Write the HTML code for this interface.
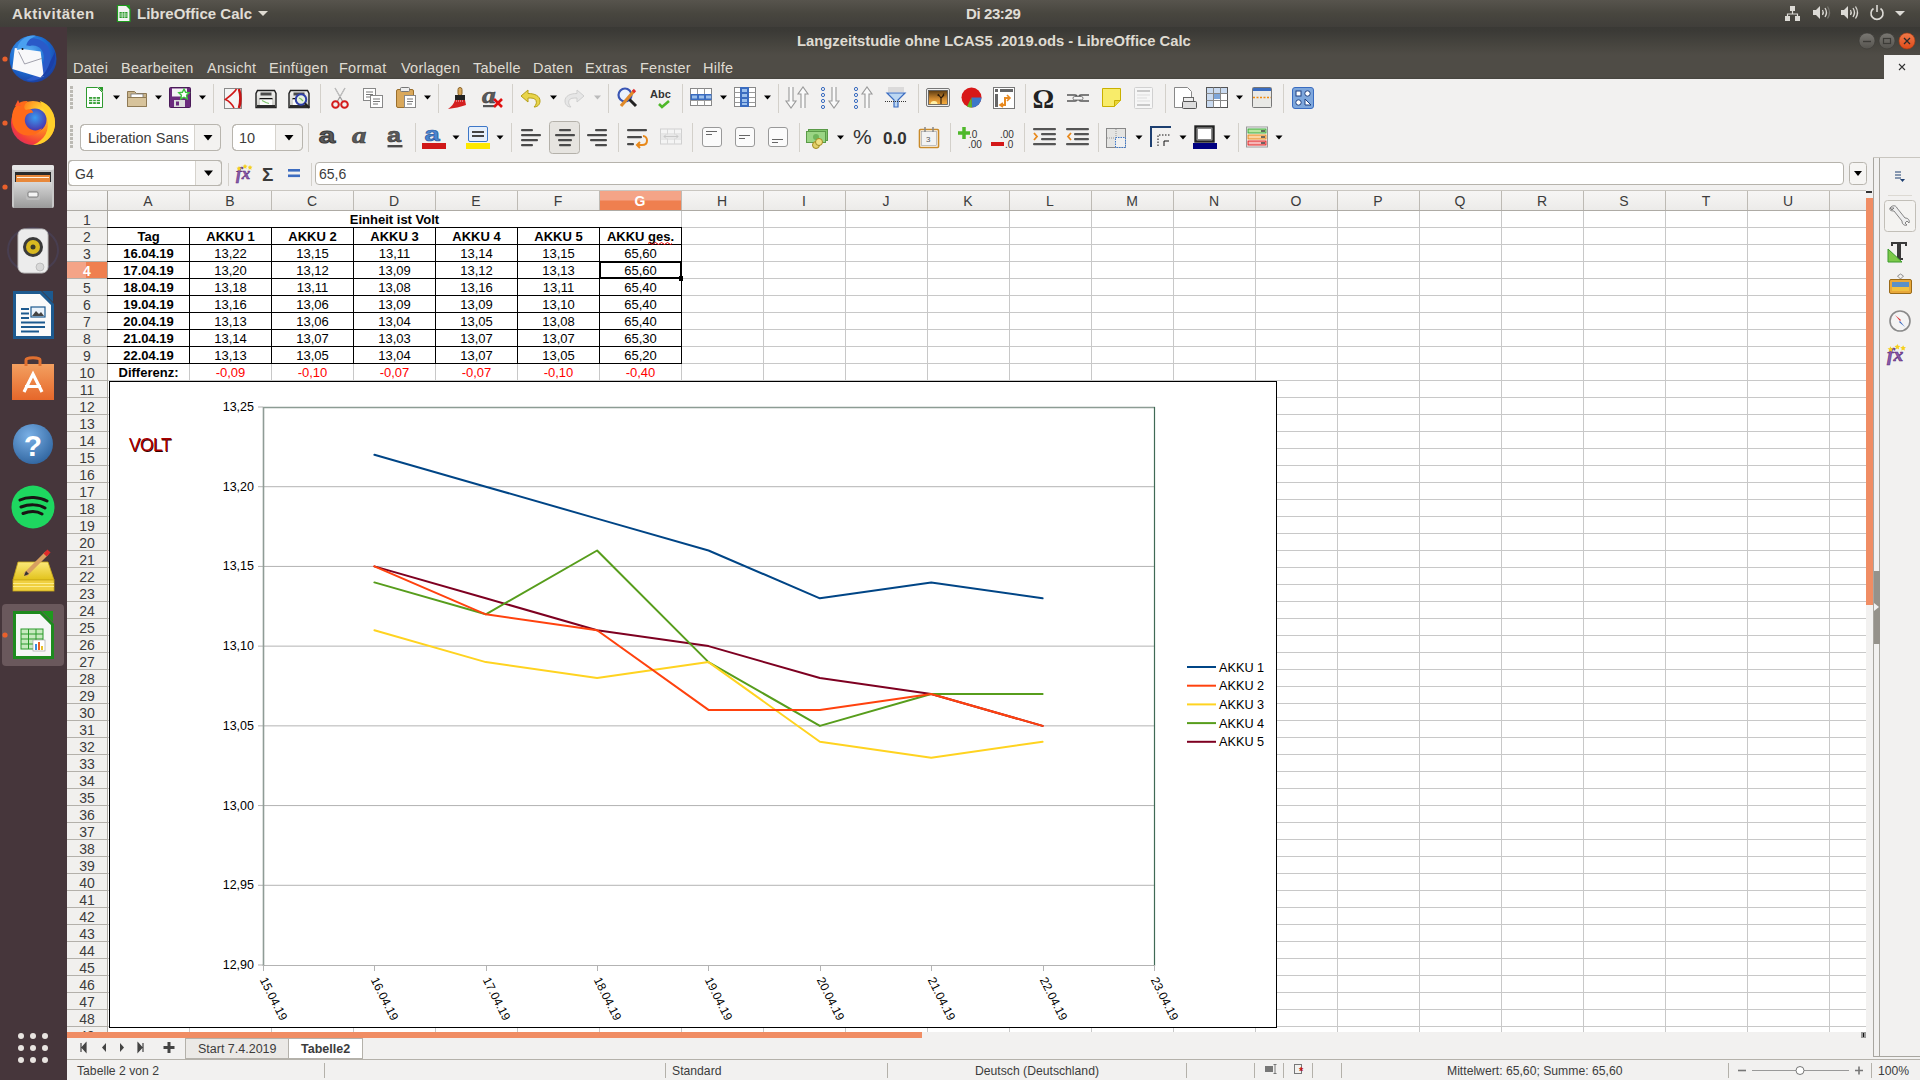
<!DOCTYPE html>
<html><head><meta charset="utf-8"><title>LibreOffice Calc</title>
<style>
html,body{margin:0;padding:0;}
body{width:1920px;height:1080px;overflow:hidden;position:relative;background:#f2f1f0;font-family:"Liberation Sans", sans-serif;}
.a{position:absolute;}
.t{position:absolute;white-space:nowrap;line-height:1;}
</style></head><body>

<div class="a" style="left:0;top:0;width:1920px;height:27px;background:linear-gradient(#57544d,#48463f 50%,#403e3a);"></div>
<div class="t" style="left:12px;top:6px;font-size:15px;font-weight:bold;color:#e0ddd6;letter-spacing:0.55px;">Aktivitäten</div>
<div class="t" style="left:137px;top:6px;font-size:15px;font-weight:bold;color:#e0ddd6;">LibreOffice Calc</div>
<div class="t" style="left:966px;top:6px;font-size:15px;font-weight:bold;color:#e0ddd6;letter-spacing:-0.4px;">Di 23:29</div>
<svg class="a" style="left:0;top:27px;" width="67" height="1053" viewBox="0 27 67 1053"><defs><radialGradient id="tbg" cx="0.4" cy="0.35" r="0.7"><stop offset="0" stop-color="#5fb3f5"/><stop offset="0.6" stop-color="#1a6ad0"/><stop offset="1" stop-color="#1b3a9a"/></radialGradient><radialGradient id="ffg" cx="0.7" cy="0.25" r="0.9"><stop offset="0" stop-color="#ffe23a"/><stop offset="0.45" stop-color="#ff8a1e"/><stop offset="0.8" stop-color="#f23c3c"/><stop offset="1" stop-color="#d62a6a"/></radialGradient><radialGradient id="ffb" cx="0.5" cy="0.4" r="0.6"><stop offset="0" stop-color="#3a9cf0"/><stop offset="1" stop-color="#4a2fa8"/></radialGradient><linearGradient id="fil" x1="0" y1="0" x2="0" y2="1"><stop offset="0" stop-color="#d8d8d8"/><stop offset="1" stop-color="#9a9a9a"/></linearGradient><linearGradient id="bag" x1="0" y1="0" x2="0" y2="1"><stop offset="0" stop-color="#f3a060"/><stop offset="1" stop-color="#e6672a"/></linearGradient><radialGradient id="hlp" cx="0.4" cy="0.3" r="0.8"><stop offset="0" stop-color="#7ab0e6"/><stop offset="1" stop-color="#2a5f9a"/></radialGradient><linearGradient id="nts" x1="0" y1="0" x2="0" y2="1"><stop offset="0" stop-color="#fbe87a"/><stop offset="1" stop-color="#e2c21a"/></linearGradient></defs><rect x="0" y="27" width="67" height="1053" fill="#46363b"/><circle cx="5" cy="59" r="2.6" fill="#e9602c"/><circle cx="5" cy="123" r="2.6" fill="#e9602c"/><circle cx="5" cy="187" r="2.6" fill="#e9602c"/><circle cx="33" cy="59" r="23.5" fill="url(#tbg)"/><path d="M20 44 C26 36 40 36 48 46 C52 54 52 66 46 74 C40 80 32 82 26 80 C36 76 44 68 44 58 C44 50 38 44 30 46 Z" fill="#2a5ac8"/><path d="M14.8 48 L40.6 51.6 L43.7 76.3 L40.6 77.5 L12.3 68.9 Z" fill="#f8f8fa"/><path d="M18.5 51.6 L24.6 64 L41.9 58.4" fill="none" stroke="#8a8a98" stroke-width="0.8"/><path d="M17 50 C18 40 28 34 36 36 C30 38 26 42 26 48 Z" fill="#4aa0f0"/><circle cx="22.5" cy="49" r="1" fill="#111"/><path d="M44 76 C52 70 56 62 55 52 L50 62 C48 68 46 72 40 78 Z" fill="#1a3fa8"/><circle cx="33" cy="123" r="22" fill="url(#ffg)"/><circle cx="35" cy="120" r="11.5" fill="url(#ffb)"/><path d="M12 118 C12 106 20 100 28 101 C24 104 23 108 26 110 C30 108 33 110 33 113 C28 112 24 116 25 122 C27 130 36 133 42 128 C38 136 26 138 18 132 C14 128 12 124 12 118 Z" fill="#ff6a1a"/><path d="M40 101 C50 104 56 114 55 126 C53 138 44 145 33 145 C45 140 50 130 47 118 C45 110 42 106 40 101 Z" fill="#ffcf2a"/><path d="M15 106 L18 100 L21 106 Z" fill="#ff5a2a"/><rect x="12" y="165" width="42" height="43" rx="2" fill="#c8c8c8"/><rect x="12" y="165" width="42" height="5" rx="2" fill="#e6e6e6"/><rect x="15" y="172" width="36" height="10" fill="#2a2a2a"/><rect x="16" y="175" width="34" height="7" fill="#e8883a"/><path d="M17 177.5 h32" stroke="#fff2e0" stroke-width="1"/><rect x="14" y="182" width="38" height="26" fill="url(#fil)"/><rect x="26" y="190" width="14" height="10" rx="2" fill="#bdbdbd"/><rect x="28" y="192" width="10" height="5" rx="1" fill="#f4f4f4" stroke="#666" stroke-width="0.8"/><ellipse cx="33" cy="250" rx="25" ry="22" fill="none" stroke="#4a4a70" stroke-width="2" opacity="0.4"/><rect x="18" y="229" width="30" height="44" rx="6" fill="#ececec" stroke="#bdbdbd"/><circle cx="33" cy="247" r="10" fill="#3a3a3a"/><circle cx="33" cy="247" r="7" fill="#d8b820"/><circle cx="33" cy="247" r="2.5" fill="#3a3a2a"/><circle cx="40" cy="267" r="4" fill="#d8d8d8" stroke="#aaa" stroke-width="0.6"/><path d="M14.5 292.5 h26 l12 12 v33 h-38 z" fill="#fafafa" stroke="#1d5a8f" stroke-width="3"/><path d="M42 291 h11 v11 z" fill="#1d5a8f"/><path d="M21 309 h8 M21 313.5 h8 M21 318 h8 M21 322.5 h24 M21 327 h24 M21 331.5 h18" stroke="#1d5a8f" stroke-width="2"/><rect x="31" y="307" width="14" height="10" fill="#eaf2fa" stroke="#1d5a8f" stroke-width="1.2"/><path d="M32 316 l4 -5 l3 3 l2 -2 l3 4 z" fill="#444"/><rect x="12" y="364" width="42" height="36" fill="url(#bag)"/><path d="M26 366 v-6 c0 -3 14 -3 14 0 v6" fill="none" stroke="#e07030" stroke-width="3"/><path d="M24 392 L33 374 L42 392" fill="none" stroke="#fff" stroke-width="3.2"/><rect x="25" y="385" width="16" height="3" fill="#fff"/><circle cx="33" cy="444" r="20" fill="url(#hlp)"/><text x="33" y="456" text-anchor="middle" font-family="Liberation Sans" font-weight="bold" font-size="30" fill="#fff">?</text><circle cx="33" cy="507" r="21.5" fill="#1ed760"/><path d="M20 500 C28 496 40 497 47 501 M21 507 C29 504 39 504 45 508 M23 513.5 C30 511 37 511 42 514" fill="none" stroke="#191414" stroke-width="3" stroke-linecap="round"/><path d="M18 562 h30 l6 18 h-41 z" fill="url(#nts)" stroke="#c8a818" stroke-width="0.8"/><rect x="13" y="580" width="41" height="11" fill="#f0d040" stroke="#c8a818" stroke-width="0.8"/><path d="M13 583.5 h41 M13 586.5 h41" stroke="#fff2a0" stroke-width="0.8"/><path d="M25 575 L47 553" stroke="#d8a060" stroke-width="4.5"/><path d="M45 555 L49 551" stroke="#e02a2a" stroke-width="4.5"/><path d="M24 576 l2 -5 l3 3 z" fill="#333"/><rect x="2" y="604" width="62" height="62" rx="4" fill="#6a585c"/><path d="M14.5 612.5 h26 l12 12 v33 h-38 z" fill="#f6f6f6" stroke="#1e8a1e" stroke-width="3"/><path d="M42 611 h11 v11 z" fill="#1e9a1e"/><rect x="21" y="629" width="22" height="20" fill="#c8eac0" stroke="#2a9a2a" stroke-width="1"/><path d="M21 634 h22 M21 639 h22 M21 644 h22 M28.5 629 v20 M36 629 v20" stroke="#2a9a2a" stroke-width="1"/><rect x="33" y="640" width="12" height="11" fill="#fff" stroke="#999" stroke-width="0.6"/><rect x="35" y="644" width="2" height="6" fill="#3a8ae0"/><rect x="38" y="642" width="2" height="8" fill="#e8602a"/><rect x="41" y="646" width="2" height="4" fill="#e8c02a"/><circle cx="5" cy="635" r="2.6" fill="#e9602c"/><circle cx="21" cy="1036" r="3" fill="#e8e4e0"/><circle cx="33" cy="1036" r="3" fill="#e8e4e0"/><circle cx="45" cy="1036" r="3" fill="#e8e4e0"/><circle cx="21" cy="1048" r="3" fill="#e8e4e0"/><circle cx="33" cy="1048" r="3" fill="#e8e4e0"/><circle cx="45" cy="1048" r="3" fill="#e8e4e0"/><circle cx="21" cy="1060" r="3" fill="#e8e4e0"/><circle cx="33" cy="1060" r="3" fill="#e8e4e0"/><circle cx="45" cy="1060" r="3" fill="#e8e4e0"/></svg>
<div class="a" style="left:67px;top:27px;width:1853px;height:52px;background:linear-gradient(#3a3935 0px,#3b3a36 4px,#47453f 18px,#4f4c46 28px,#4f4c46 50px,#45433e 52px);"></div>
<div class="t" style="left:797px;top:34px;font-size:14.8px;font-weight:bold;color:#dfdbd2;">Langzeitstudie ohne LCAS5 .2019.ods - LibreOffice Calc</div>
<div class="t" style="left:73px;top:61px;font-size:14.5px;color:#dfdbd2;letter-spacing:0.25px;">Datei</div>
<div class="t" style="left:121px;top:61px;font-size:14.5px;color:#dfdbd2;letter-spacing:0.25px;">Bearbeiten</div>
<div class="t" style="left:207px;top:61px;font-size:14.5px;color:#dfdbd2;letter-spacing:0.25px;">Ansicht</div>
<div class="t" style="left:269px;top:61px;font-size:14.5px;color:#dfdbd2;letter-spacing:0.25px;">Einfügen</div>
<div class="t" style="left:339px;top:61px;font-size:14.5px;color:#dfdbd2;letter-spacing:0.25px;">Format</div>
<div class="t" style="left:401px;top:61px;font-size:14.5px;color:#dfdbd2;letter-spacing:0.25px;">Vorlagen</div>
<div class="t" style="left:473px;top:61px;font-size:14.5px;color:#dfdbd2;letter-spacing:0.25px;">Tabelle</div>
<div class="t" style="left:533px;top:61px;font-size:14.5px;color:#dfdbd2;letter-spacing:0.25px;">Daten</div>
<div class="t" style="left:585px;top:61px;font-size:14.5px;color:#dfdbd2;letter-spacing:0.25px;">Extras</div>
<div class="t" style="left:640px;top:61px;font-size:14.5px;color:#dfdbd2;letter-spacing:0.25px;">Fenster</div>
<div class="t" style="left:703px;top:61px;font-size:14.5px;color:#dfdbd2;letter-spacing:0.25px;">Hilfe</div>
<div class="a" style="left:1884px;top:55px;width:36px;height:24px;background:#f2f1f0;"></div>
<div class="a" style="left:67px;top:79px;width:1806px;height:79px;background:#f2f1f0;"></div>
<div class="a" style="left:68px;top:160px;width:152px;height:24px;border:1px solid #b6b3ac;border-radius:3px;background:#fff;"></div>
<div class="t" style="left:75px;top:167px;font-size:14px;color:#3c3c3c;">G4</div>
<div class="a" style="left:315px;top:162px;width:1527px;height:21px;border:1px solid #b6b3ac;border-radius:4px;background:#fff;"></div>
<div class="t" style="left:319px;top:167px;font-size:14px;color:#3c3c3c;">65,6</div>
<svg class="a" style="left:0;top:0;" width="1920" height="200"><rect x="70" y="86" width="3" height="3" fill="#bcbab4"/><rect x="70" y="90" width="3" height="3" fill="#bcbab4"/><rect x="70" y="94" width="3" height="3" fill="#bcbab4"/><rect x="70" y="98" width="3" height="3" fill="#bcbab4"/><rect x="70" y="102" width="3" height="3" fill="#bcbab4"/><rect x="70" y="106" width="3" height="3" fill="#bcbab4"/><rect x="70" y="125" width="3" height="3" fill="#bcbab4"/><rect x="70" y="129" width="3" height="3" fill="#bcbab4"/><rect x="70" y="133" width="3" height="3" fill="#bcbab4"/><rect x="70" y="137" width="3" height="3" fill="#bcbab4"/><rect x="70" y="141" width="3" height="3" fill="#bcbab4"/><rect x="70" y="145" width="3" height="3" fill="#bcbab4"/><g transform="translate(85,87) scale(1.0)"><path d="M1.5 0.5 h11 l5 5 v15 h-16 z" fill="#fff" stroke="#2f9a2f"/><path d="M13 0 h5 v5 z" fill="#2a9a2a"/><rect x="4" y="10" width="11" height="7" fill="#3aa03a"/><path d="M4 12.3 h11 M4 14.6 h11 M7.7 10 v7 M11.3 10 v7" stroke="#fff" stroke-width="0.9"/></g><path d="M113.0 95.5 h7 l-3.5 4 z" fill="#000"/><g transform="translate(127,88) scale(1.0)"><path d="M0.5 3.5 h7 l2 2 h10 v13 h-19 z" fill="#c9b48c" stroke="#8f7a55"/><rect x="4" y="6" width="12" height="6" fill="#fff" stroke="#777" stroke-width="0.8"/><path d="M0.5 9.5 h19 v9 h-19 z" fill="#d7c39b" stroke="#8f7a55"/></g><path d="M155.0 95.5 h7 l-3.5 4 z" fill="#000"/><g transform="translate(169,87) scale(1.0)"><rect x="0.5" y="0.5" width="21" height="20" rx="1" fill="#6b2b7d" stroke="#4a1a58"/><rect x="3" y="1.5" width="15" height="8" fill="#f4f4f4"/><rect x="5" y="13" width="11" height="7" fill="#ddd"/><rect x="7" y="14.5" width="3" height="4" fill="#6b2b7d"/><path d="M15 2 l1.6 3.3 3.6 .5 -2.6 2.5 .6 3.6 -3.2 -1.7 -3.2 1.7 .6 -3.6 -2.6 -2.5 3.6 -.5 z" fill="#fff" stroke="#3cc23c" stroke-width="1.4"/></g><path d="M199.0 95.5 h7 l-3.5 4 z" fill="#000"/><line x1="213.5" y1="84" x2="213.5" y2="113" stroke="#d3d0ca"/><g transform="translate(224,87) scale(1.0)"><rect x="0.5" y="1.5" width="17" height="20" fill="#f4f4f4" stroke="#8a8a8a"/><path d="M12.5 2 C10 6 6 9 1.5 12.5 C5 14 8 17 10 21" fill="none" stroke="#d01818" stroke-width="1.6"/><path d="M15 2 C16.8 8 16.8 15 15 21" fill="none" stroke="#c81414" stroke-width="2.6"/></g><g transform="translate(255,87) scale(1.0)"><defs><linearGradient id="prg" x1="0" y1="0" x2="0" y2="1"><stop offset="0" stop-color="#f4f4f2"/><stop offset="1" stop-color="#c8c8c4"/></linearGradient></defs><path d="M2.5 3.5 h17 l1.5 3 v14 h-20 v-14 z" fill="url(#prg)" stroke="#1e1e1e" stroke-width="1.4"/><rect x="5.5" y="5.5" width="11" height="3" fill="#4a4a4a"/><rect x="4.5" y="11" width="13" height="1.5" fill="#111"/><rect x="5" y="12.5" width="12" height="5.5" fill="#fafafa"/><path d="M7 13.5 l4 2 l3 1" stroke="#7cc46a" stroke-width="1.1" fill="none"/><rect x="2" y="18" width="18" height="3" fill="#2a2a2a"/></g><g transform="translate(288,87) scale(1.0)"><defs><linearGradient id="prg" x1="0" y1="0" x2="0" y2="1"><stop offset="0" stop-color="#f4f4f2"/><stop offset="1" stop-color="#c8c8c4"/></linearGradient></defs><path d="M2.5 3.5 h17 l1.5 3 v14 h-20 v-14 z" fill="url(#prg)" stroke="#1e1e1e" stroke-width="1.4"/><rect x="5.5" y="5.5" width="11" height="3" fill="#4a4a4a"/><rect x="4.5" y="11" width="13" height="1.5" fill="#111"/><rect x="5" y="12.5" width="12" height="5.5" fill="#fafafa"/><path d="M7 13.5 l4 2 l3 1" stroke="#7cc46a" stroke-width="1.1" fill="none"/><rect x="2" y="18" width="18" height="3" fill="#2a2a2a"/><circle cx="13" cy="12.5" r="5.2" fill="#e6f0e0" stroke="#2f3fa8" stroke-width="2"/><path d="M11 11 l2 1 l2 2" stroke="#7cc46a" stroke-width="1.2" fill="none"/><path d="M16.8 16.3 l4.4 4.4" stroke="#222" stroke-width="2.2"/></g><line x1="320.5" y1="84" x2="320.5" y2="113" stroke="#d3d0ca"/><g transform="translate(331,87) scale(1.0)"><path d="M4 1 L12 15 M14 1 L6 15" stroke="#9a9a9a" stroke-width="1.2" fill="none"/><path d="M4 1 L9 10 M14 1 L9 10" stroke="#d8d8d8" stroke-width="0.6" fill="none"/><circle cx="4.5" cy="17.5" r="3.3" fill="none" stroke="#d31c1c" stroke-width="2"/><circle cx="13.5" cy="17.5" r="3.3" fill="none" stroke="#d31c1c" stroke-width="2"/></g><g transform="translate(363,88) scale(1.0)"><rect x="0.5" y="0.5" width="12" height="12" fill="#fff" stroke="#888"/><path d="M3 4 h7 M3 6.5 h7 M3 9 h5" stroke="#777"/><rect x="7.5" y="7.5" width="12" height="12" fill="#fff" stroke="#888"/><path d="M10 11 h7 M10 13.5 h7 M10 16 h5" stroke="#777"/></g><g transform="translate(396,87) scale(1.0)"><rect x="0.5" y="2.5" width="17" height="18" rx="1.5" fill="#d9a85b" stroke="#9a6f2c"/><rect x="4.5" y="0.5" width="9" height="4" rx="1" fill="#eee" stroke="#777"/><rect x="8.5" y="8.5" width="11" height="12" fill="#fff" stroke="#888"/><path d="M11 12 h6 M11 14.5 h6 M11 17 h5" stroke="#777"/></g><path d="M424.0 95.5 h7 l-3.5 4 z" fill="#000"/><line x1="438.5" y1="84" x2="438.5" y2="113" stroke="#d3d0ca"/><g transform="translate(447,87) scale(1.0)"><rect x="11" y="0.5" width="4" height="8" rx="2" fill="#d9a85b" stroke="#8a6428"/><rect x="8" y="8" width="10" height="5" fill="#222"/><path d="M8 13 h10 l1 5 c-5 2 -12 3 -18 4 c3 -2 6 -5 7 -9 z" fill="#d42020"/><path d="M9 14 h8" stroke="#fff" stroke-width="0.8" stroke-dasharray="1 1"/></g><g transform="translate(482,87) scale(1.0)"><text transform="scale(1.2,1)" x="0" y="16" font-family="Liberation Serif" font-style="italic" font-weight="bold" font-size="23" fill="#5a5a5a" stroke="#3a3a3a" stroke-width="0.5">a</text><rect x="1" y="18" width="11" height="2.2" fill="#555"/><path d="M12 12 l8 8 M20 12 l-8 8" stroke="#e01010" stroke-width="2.6"/></g><line x1="512.5" y1="84" x2="512.5" y2="113" stroke="#d3d0ca"/><g transform="translate(520,88) scale(1.0)"><path d="M1 8 L8 2 V5.5 C15 5.5 20 8 20 13 C20 17 17 19 14 19 C16 17 17 15 16 12.5 C15 10 12 10 8 10 V14 Z" fill="#e8d44a" stroke="#b59f18" stroke-width="1"/></g><path d="M550.0 95.5 h7 l-3.5 4 z" fill="#000"/><g transform="translate(563,88) scale(1.0)"><path d="M21 8 L14 2 V5.5 C7 5.5 2 8 2 13 C2 17 5 19 8 19 C6 17 5 15 6 12.5 C7 10 10 10 14 10 V14 Z" fill="#e6e6e6" stroke="#cfcfcf" stroke-width="1"/></g><path d="M594.0 95.5 h7 l-3.5 4 z" fill="#bbb"/><line x1="608.5" y1="84" x2="608.5" y2="113" stroke="#d3d0ca"/><g transform="translate(617,87) scale(1.0)"><circle cx="8" cy="8" r="6.5" fill="#eaf2fb" stroke="#3a56b4" stroke-width="2.2"/><path d="M12.5 12.5 L19 19" stroke="#222" stroke-width="3"/><path d="M4 19 L17 4" stroke="#e08a2a" stroke-width="3.2"/><path d="M16 5 L18 3" stroke="#e03030" stroke-width="3.2"/></g><g transform="translate(650,88) scale(1.0)"><text x="0" y="10" font-family="Liberation Sans" font-weight="bold" font-size="11" fill="#333">Abc</text><path d="M9 16 l3 3 l7 -6" fill="none" stroke="#4fb82a" stroke-width="2.6"/></g><line x1="682.5" y1="84" x2="682.5" y2="113" stroke="#d3d0ca"/><g transform="translate(690,87) scale(1.0)"><rect x="0.5" y="1.5" width="21" height="17" fill="#fff" stroke="#888"/><path d="M0.5 7.5 h21 M0.5 13.5 h21 M7.5 1.5 v17 M14.5 1.5 v17" stroke="#999"/><rect x="0.5" y="7" width="21" height="6" fill="#3a6cc0"/><rect x="2" y="8.5" width="5" height="3" fill="#9cc0ec"/><rect x="9" y="8.5" width="5" height="3" fill="#9cc0ec"/><rect x="16" y="8.5" width="5" height="3" fill="#9cc0ec"/></g><path d="M720.0 95.5 h7 l-3.5 4 z" fill="#000"/><g transform="translate(734,87) scale(1.0)"><rect x="0.5" y="0.5" width="21" height="19" fill="#fff" stroke="#888"/><path d="M0.5 5.5 h21 M0.5 10.5 h21 M0.5 15.5 h21 M7.5 0.5 v19 M14.5 0.5 v19" stroke="#999"/><rect x="6" y="0" width="9" height="20" fill="#3a6cc0"/><rect x="8" y="2" width="5" height="3" fill="#9cc0ec"/><rect x="8" y="7" width="5" height="3" fill="#9cc0ec"/><rect x="8" y="12" width="5" height="3" fill="#9cc0ec"/><rect x="8" y="16" width="5" height="2" fill="#9cc0ec"/></g><path d="M764.0 95.5 h7 l-3.5 4 z" fill="#000"/><line x1="778.5" y1="84" x2="778.5" y2="113" stroke="#d3d0ca"/><g transform="translate(786,87) scale(1.0)"><path d="M3 0 v14 h-3 l5 7 l5 -7 h-3 v-14" fill="#fafafa" stroke="#999" stroke-width="1.1"/></g><g transform="translate(798,87) scale(1.0)"><path d="M3 21 v-14 h-3 l5 -7 l5 7 h-3 v14" fill="#fafafa" stroke="#999" stroke-width="1.1"/></g><circle cx="823" cy="89" r="1.6" fill="none" stroke="#3a6cc0" stroke-width="1"/><circle cx="823" cy="95" r="1.6" fill="none" stroke="#3a6cc0" stroke-width="1"/><circle cx="823" cy="101" r="1.6" fill="none" stroke="#3a6cc0" stroke-width="1"/><circle cx="823" cy="107" r="1.6" fill="none" stroke="#3a6cc0" stroke-width="1"/><g transform="translate(829,87) scale(1.0)"><path d="M3 0 v14 h-3 l5 7 l5 -7 h-3 v-14" fill="#fafafa" stroke="#999" stroke-width="1.1"/></g><circle cx="856" cy="89" r="1.6" fill="none" stroke="#3a6cc0" stroke-width="1"/><circle cx="856" cy="95" r="1.6" fill="none" stroke="#3a6cc0" stroke-width="1"/><circle cx="856" cy="101" r="1.6" fill="none" stroke="#3a6cc0" stroke-width="1"/><circle cx="856" cy="107" r="1.6" fill="none" stroke="#3a6cc0" stroke-width="1"/><g transform="translate(862,87) scale(1.0)"><path d="M3 21 v-14 h-3 l5 -7 l5 7 h-3 v14" fill="#fafafa" stroke="#999" stroke-width="1.1"/></g><g transform="translate(885,87) scale(1.0)"><rect x="3" y="0" width="16" height="5" fill="#ccc" opacity="0.6"/><path d="M2 6 h18 l-7 7 v7 h-4 v-7 z" fill="#bcd7f2" stroke="#3a6cc0" stroke-width="1.2"/><path d="M0 14.5 h22" stroke="#333" stroke-dasharray="1 1"/></g><line x1="918.5" y1="84" x2="918.5" y2="113" stroke="#d3d0ca"/><g transform="translate(926,87) scale(1.0)"><defs><linearGradient id="skyg" x1="0" y1="0" x2="0" y2="1"><stop offset="0" stop-color="#5a3a10"/><stop offset="0.6" stop-color="#d08a30"/><stop offset="1" stop-color="#f8b040"/></linearGradient><clipPath id="imgclip"><rect x="3" y="4" width="18" height="13"/></clipPath></defs><rect x="0.5" y="1.5" width="23" height="18" rx="1.5" fill="#f0f0f0" stroke="#777"/><rect x="2.5" y="3.5" width="19" height="14" fill="url(#skyg)" stroke="#555" stroke-width="0.8"/><g clip-path="url(#imgclip)"><circle cx="8" cy="17.5" r="3.6" fill="#fff0a8"/><path d="M15 17 v-6 l-3 -4 M15 11 l3 -3 M13.5 9 l-2 -1 M16.5 9.5 l1.5 -3" stroke="#2a1a0a" stroke-width="1.1" fill="none"/></g></g><g transform="translate(961,87) scale(1.0)"><circle cx="10.5" cy="10.5" r="10" fill="#d81818"/><path d="M10.5 10.5 L20.5 10.5 A10 10 0 0 1 11 20.5 Z" fill="#3d77c8"/><path d="M10.5 10.5 L11 20.5 A10 10 0 0 1 6 19.5 Z" fill="#5cb82a"/></g><g transform="translate(993,87) scale(1.0)"><rect x="0.5" y="0.5" width="21" height="21" fill="#fff" stroke="#777"/><rect x="2" y="2" width="3" height="3" fill="#666"/><rect x="7" y="2" width="13" height="3" fill="#666"/><rect x="2" y="7" width="3" height="13" fill="#666"/><path d="M8 18 h4 v-7 h4" fill="none" stroke="#e88a20" stroke-width="2"/><path d="M14 8 l3 3 l-3 3 M10 16 l-3 2 l3 2" fill="none" stroke="#e88a20" stroke-width="1.6"/></g><line x1="1025.5" y1="84" x2="1025.5" y2="113" stroke="#d3d0ca"/><g transform="translate(1034,87) scale(1.0)"><text x="-1.5" y="20.5" font-family="Liberation Serif" font-weight="bold" font-size="27" fill="#222">Ω</text></g><g transform="translate(1067,88) scale(1.0)"><path d="M0 7 h8 c1.5 0 2 1 2 2 v2 c0 1 -0.5 2 -2 2 h-8" fill="none" stroke="#555" stroke-width="1.6"/><path d="M22 7 h-8 c-1.5 0 -2 1 -2 2 v2 c0 1 0.5 2 2 2 h8" fill="none" stroke="#555" stroke-width="1.6"/><rect x="6" y="8.5" width="10" height="3.5" rx="1.7" fill="#f4f4f4" stroke="#777" stroke-width="1"/></g><g transform="translate(1102,87) scale(1.0)"><path d="M0.5 1.5 h18 v12 l-6 6 h-12 z" fill="#f8ec6a" stroke="#c9b000"/><path d="M18.5 13.5 h-6 v6" fill="#e8d43a" stroke="#c9b000"/></g><g transform="translate(1134,87) scale(1.0)"><rect x="0.5" y="0.5" width="18" height="21" rx="1" fill="#f6f6f6" stroke="#d0d0d0"/><path d="M3 4 h13 M3 18 h13" stroke="#c8c8c8" stroke-width="2"/><path d="M3 8 h13 M3 11 h10 M3 14 h13" stroke="#ddd"/></g><line x1="1165.5" y1="84" x2="1165.5" y2="113" stroke="#d3d0ca"/><g transform="translate(1174,87) scale(1.0)"><path d="M0.5 0.5 h13 l4 4 v16 h-17 z" fill="#fff" stroke="#888"/><rect x="9.5" y="10.5" width="10" height="4" fill="#eee" stroke="#666"/><rect x="8.5" y="14.5" width="14" height="7" rx="1" fill="#ddd" stroke="#555"/></g><g transform="translate(1206,87) scale(1.0)"><rect x="0.5" y="0.5" width="21" height="20" fill="#fff" stroke="#555"/><rect x="1" y="1" width="20" height="5" fill="#c9daf0"/><rect x="1" y="1" width="6" height="19" fill="#c9daf0"/><rect x="8" y="7" width="6" height="5" fill="#7ea6da"/><path d="M0.5 6.5 h21 M0.5 13.5 h21 M7.5 0.5 v20 M14.5 0.5 v20" stroke="#888"/></g><path d="M1236.0 95.5 h7 l-3.5 4 z" fill="#000"/><g transform="translate(1252,87) scale(1.0)"><rect x="0.5" y="0.5" width="19" height="20" rx="1" fill="#e9e9e6" stroke="#777"/><rect x="1" y="1" width="18" height="3" fill="#3a6cc0"/><path d="M1 10.5 h18" stroke="#f08a10" stroke-width="1.4" stroke-dasharray="2 1.5"/></g><line x1="1283.5" y1="84" x2="1283.5" y2="113" stroke="#d3d0ca"/><g transform="translate(1292,87) scale(1.0)"><rect x="0.5" y="0.5" width="21" height="21" rx="2.5" fill="#7ea7dc" stroke="#3a6cc0"/><rect x="4" y="4" width="5" height="5" fill="#fff" stroke="#1d3f80" stroke-width="1"/><circle cx="15.5" cy="6.5" r="2.7" fill="#fff" stroke="#1d3f80" stroke-width="1"/><circle cx="6.5" cy="15.5" r="2.7" fill="#fff" stroke="#1d3f80" stroke-width="1"/><path d="M13 12 v6 h6 z" fill="#fff" stroke="#1d3f80" stroke-width="1"/></g><rect x="80.5" y="124.5" width="140" height="26" rx="4" fill="#fff" stroke="#b8b5ae"/><path d="M194.5 125 v25" stroke="#d6d3cd"/><rect x="195" y="125" width="25" height="25" fill="#f3f2f0"/><rect x="80.5" y="124.5" width="140" height="26" rx="4" fill="none" stroke="#b8b5ae"/><path d="M203.5 135 h9 l-4.5 5.5 z" fill="#000"/><text x="88" y="143" font-family="Liberation Sans" font-size="14.5" fill="#3c3c3c">Liberation Sans</text><rect x="189" y="127" width="5" height="22" fill="#fff"/><rect x="232.5" y="124.5" width="70" height="26" rx="4" fill="#fff" stroke="#b8b5ae"/><rect x="276" y="125" width="26" height="25" fill="#f3f2f0"/><path d="M275.5 125 v25" stroke="#d6d3cd"/><rect x="232.5" y="124.5" width="70" height="26" rx="4" fill="none" stroke="#b8b5ae"/><path d="M284.5 135 h9 l-4.5 5.5 z" fill="#000"/><text x="239" y="143" font-family="Liberation Sans" font-size="14.5" fill="#3c3c3c">10</text><line x1="308.5" y1="123" x2="308.5" y2="152" stroke="#d3d0ca"/><g transform="translate(318,127) scale(1.0)"><text transform="scale(1.35,1)" x="0.5" y="16" font-family="Liberation Sans" font-weight="bold" font-size="22" fill="#5a5a5a" stroke="#3a3a3a" stroke-width="1">a</text></g><g transform="translate(352,127) scale(1.0)"><text transform="scale(1.2,1)" x="0" y="16" font-family="Liberation Serif" font-style="italic" font-weight="bold" font-size="24" fill="#5a5a5a" stroke="#3a3a3a" stroke-width="0.6">a</text></g><g transform="translate(387,128) scale(1.0)"><text transform="scale(1.2,1)" x="0" y="14" font-family="Liberation Sans" font-weight="bold" font-size="21" fill="#5a5a5a" stroke="#3a3a3a" stroke-width="0.6">a</text><rect x="0.5" y="17" width="15" height="2.4" fill="#4a4a4a"/></g><line x1="415.5" y1="123" x2="415.5" y2="152" stroke="#d3d0ca"/><g transform="translate(422,126) scale(1.0)"><text transform="scale(1.3,1)" x="2" y="15" font-family="Liberation Sans" font-weight="bold" font-size="21" fill="#4a86d0" stroke="#2a5aa0" stroke-width="0.7">a</text><rect x="0" y="17" width="24" height="6" fill="#d01818"/></g><path d="M452.5 135.5 h7 l-3.5 4 z" fill="#000"/><g transform="translate(466,126) scale(1.0)"><rect x="2.5" y="0.5" width="19" height="15" rx="1.5" fill="#e6effa" stroke="#3d77c8"/><path d="M6 6 h12 M6 10 h12" stroke="#444" stroke-width="2"/><rect x="0" y="17" width="24" height="6" fill="#fde800"/></g><path d="M496.5 135.5 h7 l-3.5 4 z" fill="#000"/><line x1="511.5" y1="123" x2="511.5" y2="152" stroke="#d3d0ca"/><g transform="translate(521,129) scale(1.0)"><rect x="0" y="0" width="12" height="2.3" rx="1" fill="#4a4a4a"/><rect x="0" y="5" width="20" height="2.3" rx="1" fill="#4a4a4a"/><rect x="0" y="10" width="17" height="2.3" rx="1" fill="#4a4a4a"/><rect x="0" y="15" width="12" height="2.3" rx="1" fill="#4a4a4a"/></g><rect x="549.5" y="121.5" width="30" height="32" rx="3" fill="#e6e4e0" stroke="#b4b1aa"/><g transform="translate(555,129) scale(1.0)"><rect x="4" y="0" width="12" height="2.3" rx="1" fill="#4a4a4a"/><rect x="0" y="5" width="20" height="2.3" rx="1" fill="#4a4a4a"/><rect x="3" y="10" width="14" height="2.3" rx="1" fill="#4a4a4a"/><rect x="4" y="15" width="12" height="2.3" rx="1" fill="#4a4a4a"/></g><g transform="translate(587,129) scale(1.0)"><rect x="8" y="0" width="12" height="2.3" rx="1" fill="#4a4a4a"/><rect x="0" y="5" width="20" height="2.3" rx="1" fill="#4a4a4a"/><rect x="3" y="10" width="17" height="2.3" rx="1" fill="#4a4a4a"/><rect x="8" y="15" width="12" height="2.3" rx="1" fill="#4a4a4a"/></g><line x1="618.5" y1="123" x2="618.5" y2="152" stroke="#d3d0ca"/><g transform="translate(627,129) scale(1.0)"><rect x="0" y="0" width="20" height="2.3" rx="1" fill="#4a4a4a"/><rect x="0" y="7" width="15" height="2.3" rx="1" fill="#4a4a4a"/><rect x="0" y="14" width="7" height="2.3" rx="1" fill="#4a4a4a"/><path d="M16 7 c5 0 6 9 -1 9 h-4 M13 13 l-3 3 l3 3" fill="none" stroke="#e8891c" stroke-width="2"/></g><g transform="translate(660,128.5) scale(1.0)"><rect x="0.5" y="0.5" width="21" height="15" fill="#f4f4f4" stroke="#d0d0d0"/><path d="M0.5 5.5 h21 M0.5 10.5 h21 M7.5 0.5 v15 M14.5 0.5 v15" stroke="#d8d8d8"/><rect x="1" y="6" width="20" height="4" fill="#e8e8e8"/><path d="M4 8 h14 M6 6 l-2 2 l2 2 M16 6 l2 2 l-2 2" stroke="#c8c8c8" fill="none"/></g><line x1="692.5" y1="123" x2="692.5" y2="152" stroke="#d3d0ca"/><g transform="translate(702,127) scale(1.0)"><rect x="0.5" y="0.5" width="19" height="19" rx="2.5" fill="#fbfbfb" stroke="#999"/><path d="M4 4.5 h11 M4 7.5 h6" stroke="#666"/></g><g transform="translate(735,127) scale(1.0)"><rect x="0.5" y="0.5" width="19" height="19" rx="2.5" fill="#fbfbfb" stroke="#999"/><path d="M4 8.5 h11 M4 11.5 h6" stroke="#666"/></g><g transform="translate(768,127) scale(1.0)"><rect x="0.5" y="0.5" width="19" height="19" rx="2.5" fill="#fbfbfb" stroke="#999"/><path d="M4 12.5 h11 M4 15.5 h6" stroke="#666"/></g><line x1="799.5" y1="123" x2="799.5" y2="152" stroke="#d3d0ca"/><g transform="translate(806,128) scale(1.0)"><rect x="2.5" y="1.5" width="19" height="11" fill="#7fc46a" stroke="#5a9a48"/><rect x="0.5" y="3.5" width="19" height="11" fill="#9ad584" stroke="#5a9a48"/><circle cx="10" cy="9" r="3" fill="#6fb55a"/><circle cx="10" cy="17" r="3.5" fill="#e2d06a" stroke="#a08a20"/><circle cx="13" cy="14" r="3.5" fill="#f0df80" stroke="#a08a20"/></g><path d="M837.0 135.5 h7 l-3.5 4 z" fill="#000"/><g transform="translate(853,126) scale(1.0)"><text x="0" y="18" font-family="Liberation Sans" font-size="21" fill="#333">%</text></g><g transform="translate(883,128) scale(1.0)"><text x="0" y="16" font-family="Liberation Sans" font-weight="bold" font-size="17" fill="#333">0.0</text></g><g transform="translate(919,127) scale(1.0)"><rect x="0.5" y="2.5" width="19" height="18" rx="1" fill="#fff" stroke="#c98a2a" stroke-width="1.6"/><rect x="2.5" y="4.5" width="15" height="14" fill="#f2f2f2" stroke="#999" stroke-width="0.6"/><path d="M6 0 v5 M14 0 v5" stroke="#888" stroke-width="1.5"/><text x="7" y="15" font-family="Liberation Sans" font-size="8" fill="#555">3</text></g><line x1="950.5" y1="123" x2="950.5" y2="152" stroke="#d3d0ca"/><g transform="translate(959,127) scale(1.0)"><path d="M5 0 v12 M-1 6 h12" stroke="#4fb82a" stroke-width="3.5"/><text x="10" y="11" font-family="Liberation Sans" font-size="10" fill="#333">.0</text><text x="9" y="21" font-family="Liberation Sans" font-size="10" fill="#333">.00</text></g><g transform="translate(991,127) scale(1.0)"><rect x="0" y="15" width="13" height="4" fill="#d41818"/><text x="9" y="11" font-family="Liberation Sans" font-size="10" fill="#333">.00</text><text x="14" y="21" font-family="Liberation Sans" font-size="10" fill="#333">.0</text></g><line x1="1024.5" y1="123" x2="1024.5" y2="152" stroke="#d3d0ca"/><g transform="translate(1033,128) scale(1.0)"><rect x="0" y="0" width="23" height="2.3" rx="1" fill="#555"/><rect x="8" y="5" width="15" height="2.3" rx="1" fill="#555"/><rect x="8" y="10" width="15" height="2.3" rx="1" fill="#555"/><rect x="0" y="15" width="23" height="2.3" rx="1" fill="#555"/><path d="M1 5 l3 3.5 l-3 3.5" fill="none" stroke="#e8891c" stroke-width="1.8"/></g><g transform="translate(1066,128) scale(1.0)"><rect x="0" y="0" width="23" height="2.3" rx="1" fill="#555"/><rect x="8" y="5" width="15" height="2.3" rx="1" fill="#555"/><rect x="8" y="10" width="15" height="2.3" rx="1" fill="#555"/><rect x="0" y="15" width="23" height="2.3" rx="1" fill="#555"/><path d="M5 5 l-3 3.5 l3 3.5" fill="none" stroke="#e8891c" stroke-width="1.8"/></g><line x1="1098.5" y1="123" x2="1098.5" y2="152" stroke="#d3d0ca"/><g transform="translate(1106,128) scale(1.0)"><rect x="0.5" y="0.5" width="19" height="19" fill="#e4e4e2" stroke="#888"/><path d="M10 1 v9 M1 10 h9" stroke="#999" stroke-dasharray="1 1"/><rect x="9.5" y="9.5" width="10" height="10" fill="#f0f0f0" stroke="#3d77c8" stroke-dasharray="1.5 1"/></g><path d="M1135.5 135.5 h7 l-3.5 4 z" fill="#000"/><g transform="translate(1150,126) scale(1.0)"><path d="M1 21 V1 H21" fill="none" stroke="#1d3f70" stroke-width="2"/><path d="M8 20 V9 H21" fill="none" stroke="#111" stroke-dasharray="1.5 1.5"/><path d="M14 20 V15 H19" fill="none" stroke="#111"/></g><path d="M1179.5 135.5 h7 l-3.5 4 z" fill="#000"/><g transform="translate(1193,126) scale(1.0)"><rect x="2.5" y="0.5" width="18" height="15" fill="#fff" stroke="#222" stroke-width="2.4"/><rect x="4.5" y="2.5" width="14" height="11" fill="#fff" stroke="#888" stroke-width="1"/><rect x="0" y="17" width="24" height="6" fill="#000080"/></g><path d="M1223.5 135.5 h7 l-3.5 4 z" fill="#000"/><line x1="1238.5" y1="123" x2="1238.5" y2="152" stroke="#d3d0ca"/><g transform="translate(1246,126.5) scale(1.0)"><rect x="0.5" y="0.5" width="21" height="20" fill="#fafafa" stroke="#999"/><rect x="2" y="2.5" width="18" height="4" fill="#b9e6a0" stroke="#3ca83c"/><rect x="2" y="8.5" width="18" height="4" fill="#fcd3a0" stroke="#e8891c"/><rect x="2" y="14.5" width="18" height="4" fill="#f6b6b6" stroke="#e02020"/><path d="M15 4.5 h4 M15 10.5 h4 M15 16.5 h4" stroke="#444" stroke-width="1.3"/></g><path d="M1275.5 135.5 h7 l-3.5 4 z" fill="#000"/><line x1="228.5" y1="163" x2="228.5" y2="186" stroke="#d3d0ca"/><line x1="311.5" y1="163" x2="311.5" y2="186" stroke="#d3d0ca"/><g transform="translate(236,164) scale(1.0)"><text x="0" y="15" font-family="Liberation Serif" font-style="italic" font-weight="bold" font-size="17" fill="#8a5aaa" stroke="#5a2a7a" stroke-width="0.5">fx</text><path d="M3 2 l.8 1.6 1.7 .2 -1.3 1.2 .3 1.7 -1.5 -.8 -1.5 .8 .3 -1.7 -1.3 -1.2 1.7 -.2 z" fill="#f5d020"/><path d="M9 0 l.8 1.6 1.7 .2 -1.3 1.2 .3 1.7 -1.5 -.8 -1.5 .8 .3 -1.7 -1.3 -1.2 1.7 -.2 z" fill="#f5d020"/><path d="M14 1 l.8 1.6 1.7 .2 -1.3 1.2 .3 1.7 -1.5 -.8 -1.5 .8 .3 -1.7 -1.3 -1.2 1.7 -.2 z" fill="#f5d020"/></g><text x="262" y="181" font-family="Liberation Sans" font-weight="bold" font-size="19" fill="#3a3a3a">Σ</text><rect x="288" y="169" width="12" height="2.6" fill="#3d6cc0"/><rect x="288" y="174.5" width="12" height="2.6" fill="#3d6cc0"/></svg>
<svg class="a" style="left:67px;top:190px;" width="1799" height="842" viewBox="67 190 1799 842"><rect x="107" y="210" width="1759" height="822" fill="#fff"/><defs><linearGradient id="hdg" x1="0" y1="0" x2="0" y2="1"><stop offset="0" stop-color="#f7f6f5"/><stop offset="1" stop-color="#ecebe9"/></linearGradient></defs><rect x="67" y="190" width="1799" height="20" fill="url(#hdg)"/><rect x="67" y="210" width="40" height="822" fill="#f1f0ee"/><line x1="107" y1="210.5" x2="1866" y2="210.5" stroke="#c8c8c8" stroke-width="1"/><line x1="67" y1="210.5" x2="107" y2="210.5" stroke="#b3b0aa" stroke-width="1"/><line x1="107" y1="227.5" x2="1866" y2="227.5" stroke="#c8c8c8" stroke-width="1"/><line x1="67" y1="227.5" x2="107" y2="227.5" stroke="#b3b0aa" stroke-width="1"/><line x1="107" y1="244.5" x2="1866" y2="244.5" stroke="#c8c8c8" stroke-width="1"/><line x1="67" y1="244.5" x2="107" y2="244.5" stroke="#b3b0aa" stroke-width="1"/><line x1="107" y1="261.5" x2="1866" y2="261.5" stroke="#c8c8c8" stroke-width="1"/><line x1="67" y1="261.5" x2="107" y2="261.5" stroke="#b3b0aa" stroke-width="1"/><line x1="107" y1="278.5" x2="1866" y2="278.5" stroke="#c8c8c8" stroke-width="1"/><line x1="67" y1="278.5" x2="107" y2="278.5" stroke="#b3b0aa" stroke-width="1"/><line x1="107" y1="295.5" x2="1866" y2="295.5" stroke="#c8c8c8" stroke-width="1"/><line x1="67" y1="295.5" x2="107" y2="295.5" stroke="#b3b0aa" stroke-width="1"/><line x1="107" y1="312.5" x2="1866" y2="312.5" stroke="#c8c8c8" stroke-width="1"/><line x1="67" y1="312.5" x2="107" y2="312.5" stroke="#b3b0aa" stroke-width="1"/><line x1="107" y1="329.5" x2="1866" y2="329.5" stroke="#c8c8c8" stroke-width="1"/><line x1="67" y1="329.5" x2="107" y2="329.5" stroke="#b3b0aa" stroke-width="1"/><line x1="107" y1="346.5" x2="1866" y2="346.5" stroke="#c8c8c8" stroke-width="1"/><line x1="67" y1="346.5" x2="107" y2="346.5" stroke="#b3b0aa" stroke-width="1"/><line x1="107" y1="363.5" x2="1866" y2="363.5" stroke="#c8c8c8" stroke-width="1"/><line x1="67" y1="363.5" x2="107" y2="363.5" stroke="#b3b0aa" stroke-width="1"/><line x1="107" y1="380.5" x2="1866" y2="380.5" stroke="#c8c8c8" stroke-width="1"/><line x1="67" y1="380.5" x2="107" y2="380.5" stroke="#b3b0aa" stroke-width="1"/><line x1="107" y1="397.5" x2="1866" y2="397.5" stroke="#c8c8c8" stroke-width="1"/><line x1="67" y1="397.5" x2="107" y2="397.5" stroke="#b3b0aa" stroke-width="1"/><line x1="107" y1="414.5" x2="1866" y2="414.5" stroke="#c8c8c8" stroke-width="1"/><line x1="67" y1="414.5" x2="107" y2="414.5" stroke="#b3b0aa" stroke-width="1"/><line x1="107" y1="431.5" x2="1866" y2="431.5" stroke="#c8c8c8" stroke-width="1"/><line x1="67" y1="431.5" x2="107" y2="431.5" stroke="#b3b0aa" stroke-width="1"/><line x1="107" y1="448.5" x2="1866" y2="448.5" stroke="#c8c8c8" stroke-width="1"/><line x1="67" y1="448.5" x2="107" y2="448.5" stroke="#b3b0aa" stroke-width="1"/><line x1="107" y1="465.5" x2="1866" y2="465.5" stroke="#c8c8c8" stroke-width="1"/><line x1="67" y1="465.5" x2="107" y2="465.5" stroke="#b3b0aa" stroke-width="1"/><line x1="107" y1="482.5" x2="1866" y2="482.5" stroke="#c8c8c8" stroke-width="1"/><line x1="67" y1="482.5" x2="107" y2="482.5" stroke="#b3b0aa" stroke-width="1"/><line x1="107" y1="499.5" x2="1866" y2="499.5" stroke="#c8c8c8" stroke-width="1"/><line x1="67" y1="499.5" x2="107" y2="499.5" stroke="#b3b0aa" stroke-width="1"/><line x1="107" y1="516.5" x2="1866" y2="516.5" stroke="#c8c8c8" stroke-width="1"/><line x1="67" y1="516.5" x2="107" y2="516.5" stroke="#b3b0aa" stroke-width="1"/><line x1="107" y1="533.5" x2="1866" y2="533.5" stroke="#c8c8c8" stroke-width="1"/><line x1="67" y1="533.5" x2="107" y2="533.5" stroke="#b3b0aa" stroke-width="1"/><line x1="107" y1="550.5" x2="1866" y2="550.5" stroke="#c8c8c8" stroke-width="1"/><line x1="67" y1="550.5" x2="107" y2="550.5" stroke="#b3b0aa" stroke-width="1"/><line x1="107" y1="567.5" x2="1866" y2="567.5" stroke="#c8c8c8" stroke-width="1"/><line x1="67" y1="567.5" x2="107" y2="567.5" stroke="#b3b0aa" stroke-width="1"/><line x1="107" y1="584.5" x2="1866" y2="584.5" stroke="#c8c8c8" stroke-width="1"/><line x1="67" y1="584.5" x2="107" y2="584.5" stroke="#b3b0aa" stroke-width="1"/><line x1="107" y1="601.5" x2="1866" y2="601.5" stroke="#c8c8c8" stroke-width="1"/><line x1="67" y1="601.5" x2="107" y2="601.5" stroke="#b3b0aa" stroke-width="1"/><line x1="107" y1="618.5" x2="1866" y2="618.5" stroke="#c8c8c8" stroke-width="1"/><line x1="67" y1="618.5" x2="107" y2="618.5" stroke="#b3b0aa" stroke-width="1"/><line x1="107" y1="635.5" x2="1866" y2="635.5" stroke="#c8c8c8" stroke-width="1"/><line x1="67" y1="635.5" x2="107" y2="635.5" stroke="#b3b0aa" stroke-width="1"/><line x1="107" y1="652.5" x2="1866" y2="652.5" stroke="#c8c8c8" stroke-width="1"/><line x1="67" y1="652.5" x2="107" y2="652.5" stroke="#b3b0aa" stroke-width="1"/><line x1="107" y1="669.5" x2="1866" y2="669.5" stroke="#c8c8c8" stroke-width="1"/><line x1="67" y1="669.5" x2="107" y2="669.5" stroke="#b3b0aa" stroke-width="1"/><line x1="107" y1="686.5" x2="1866" y2="686.5" stroke="#c8c8c8" stroke-width="1"/><line x1="67" y1="686.5" x2="107" y2="686.5" stroke="#b3b0aa" stroke-width="1"/><line x1="107" y1="703.5" x2="1866" y2="703.5" stroke="#c8c8c8" stroke-width="1"/><line x1="67" y1="703.5" x2="107" y2="703.5" stroke="#b3b0aa" stroke-width="1"/><line x1="107" y1="720.5" x2="1866" y2="720.5" stroke="#c8c8c8" stroke-width="1"/><line x1="67" y1="720.5" x2="107" y2="720.5" stroke="#b3b0aa" stroke-width="1"/><line x1="107" y1="737.5" x2="1866" y2="737.5" stroke="#c8c8c8" stroke-width="1"/><line x1="67" y1="737.5" x2="107" y2="737.5" stroke="#b3b0aa" stroke-width="1"/><line x1="107" y1="754.5" x2="1866" y2="754.5" stroke="#c8c8c8" stroke-width="1"/><line x1="67" y1="754.5" x2="107" y2="754.5" stroke="#b3b0aa" stroke-width="1"/><line x1="107" y1="771.5" x2="1866" y2="771.5" stroke="#c8c8c8" stroke-width="1"/><line x1="67" y1="771.5" x2="107" y2="771.5" stroke="#b3b0aa" stroke-width="1"/><line x1="107" y1="788.5" x2="1866" y2="788.5" stroke="#c8c8c8" stroke-width="1"/><line x1="67" y1="788.5" x2="107" y2="788.5" stroke="#b3b0aa" stroke-width="1"/><line x1="107" y1="805.5" x2="1866" y2="805.5" stroke="#c8c8c8" stroke-width="1"/><line x1="67" y1="805.5" x2="107" y2="805.5" stroke="#b3b0aa" stroke-width="1"/><line x1="107" y1="822.5" x2="1866" y2="822.5" stroke="#c8c8c8" stroke-width="1"/><line x1="67" y1="822.5" x2="107" y2="822.5" stroke="#b3b0aa" stroke-width="1"/><line x1="107" y1="839.5" x2="1866" y2="839.5" stroke="#c8c8c8" stroke-width="1"/><line x1="67" y1="839.5" x2="107" y2="839.5" stroke="#b3b0aa" stroke-width="1"/><line x1="107" y1="856.5" x2="1866" y2="856.5" stroke="#c8c8c8" stroke-width="1"/><line x1="67" y1="856.5" x2="107" y2="856.5" stroke="#b3b0aa" stroke-width="1"/><line x1="107" y1="873.5" x2="1866" y2="873.5" stroke="#c8c8c8" stroke-width="1"/><line x1="67" y1="873.5" x2="107" y2="873.5" stroke="#b3b0aa" stroke-width="1"/><line x1="107" y1="890.5" x2="1866" y2="890.5" stroke="#c8c8c8" stroke-width="1"/><line x1="67" y1="890.5" x2="107" y2="890.5" stroke="#b3b0aa" stroke-width="1"/><line x1="107" y1="907.5" x2="1866" y2="907.5" stroke="#c8c8c8" stroke-width="1"/><line x1="67" y1="907.5" x2="107" y2="907.5" stroke="#b3b0aa" stroke-width="1"/><line x1="107" y1="924.5" x2="1866" y2="924.5" stroke="#c8c8c8" stroke-width="1"/><line x1="67" y1="924.5" x2="107" y2="924.5" stroke="#b3b0aa" stroke-width="1"/><line x1="107" y1="941.5" x2="1866" y2="941.5" stroke="#c8c8c8" stroke-width="1"/><line x1="67" y1="941.5" x2="107" y2="941.5" stroke="#b3b0aa" stroke-width="1"/><line x1="107" y1="958.5" x2="1866" y2="958.5" stroke="#c8c8c8" stroke-width="1"/><line x1="67" y1="958.5" x2="107" y2="958.5" stroke="#b3b0aa" stroke-width="1"/><line x1="107" y1="975.5" x2="1866" y2="975.5" stroke="#c8c8c8" stroke-width="1"/><line x1="67" y1="975.5" x2="107" y2="975.5" stroke="#b3b0aa" stroke-width="1"/><line x1="107" y1="992.5" x2="1866" y2="992.5" stroke="#c8c8c8" stroke-width="1"/><line x1="67" y1="992.5" x2="107" y2="992.5" stroke="#b3b0aa" stroke-width="1"/><line x1="107" y1="1009.5" x2="1866" y2="1009.5" stroke="#c8c8c8" stroke-width="1"/><line x1="67" y1="1009.5" x2="107" y2="1009.5" stroke="#b3b0aa" stroke-width="1"/><line x1="107" y1="1026.5" x2="1866" y2="1026.5" stroke="#c8c8c8" stroke-width="1"/><line x1="67" y1="1026.5" x2="107" y2="1026.5" stroke="#b3b0aa" stroke-width="1"/><line x1="107" y1="1043.5" x2="1866" y2="1043.5" stroke="#c8c8c8" stroke-width="1"/><line x1="67" y1="1043.5" x2="107" y2="1043.5" stroke="#b3b0aa" stroke-width="1"/><line x1="107.5" y1="210" x2="107.5" y2="1032" stroke="#c8c8c8" stroke-width="1"/><line x1="107.5" y1="190" x2="107.5" y2="210" stroke="#bdbab4" stroke-width="1"/><line x1="189.5" y1="210" x2="189.5" y2="1032" stroke="#c8c8c8" stroke-width="1"/><line x1="189.5" y1="190" x2="189.5" y2="210" stroke="#bdbab4" stroke-width="1"/><line x1="271.5" y1="210" x2="271.5" y2="1032" stroke="#c8c8c8" stroke-width="1"/><line x1="271.5" y1="190" x2="271.5" y2="210" stroke="#bdbab4" stroke-width="1"/><line x1="353.5" y1="210" x2="353.5" y2="1032" stroke="#c8c8c8" stroke-width="1"/><line x1="353.5" y1="190" x2="353.5" y2="210" stroke="#bdbab4" stroke-width="1"/><line x1="435.5" y1="210" x2="435.5" y2="1032" stroke="#c8c8c8" stroke-width="1"/><line x1="435.5" y1="190" x2="435.5" y2="210" stroke="#bdbab4" stroke-width="1"/><line x1="517.5" y1="210" x2="517.5" y2="1032" stroke="#c8c8c8" stroke-width="1"/><line x1="517.5" y1="190" x2="517.5" y2="210" stroke="#bdbab4" stroke-width="1"/><line x1="599.5" y1="210" x2="599.5" y2="1032" stroke="#c8c8c8" stroke-width="1"/><line x1="599.5" y1="190" x2="599.5" y2="210" stroke="#bdbab4" stroke-width="1"/><line x1="681.5" y1="210" x2="681.5" y2="1032" stroke="#c8c8c8" stroke-width="1"/><line x1="681.5" y1="190" x2="681.5" y2="210" stroke="#bdbab4" stroke-width="1"/><line x1="763.5" y1="210" x2="763.5" y2="1032" stroke="#c8c8c8" stroke-width="1"/><line x1="763.5" y1="190" x2="763.5" y2="210" stroke="#bdbab4" stroke-width="1"/><line x1="845.5" y1="210" x2="845.5" y2="1032" stroke="#c8c8c8" stroke-width="1"/><line x1="845.5" y1="190" x2="845.5" y2="210" stroke="#bdbab4" stroke-width="1"/><line x1="927.5" y1="210" x2="927.5" y2="1032" stroke="#c8c8c8" stroke-width="1"/><line x1="927.5" y1="190" x2="927.5" y2="210" stroke="#bdbab4" stroke-width="1"/><line x1="1009.5" y1="210" x2="1009.5" y2="1032" stroke="#c8c8c8" stroke-width="1"/><line x1="1009.5" y1="190" x2="1009.5" y2="210" stroke="#bdbab4" stroke-width="1"/><line x1="1091.5" y1="210" x2="1091.5" y2="1032" stroke="#c8c8c8" stroke-width="1"/><line x1="1091.5" y1="190" x2="1091.5" y2="210" stroke="#bdbab4" stroke-width="1"/><line x1="1173.5" y1="210" x2="1173.5" y2="1032" stroke="#c8c8c8" stroke-width="1"/><line x1="1173.5" y1="190" x2="1173.5" y2="210" stroke="#bdbab4" stroke-width="1"/><line x1="1255.5" y1="210" x2="1255.5" y2="1032" stroke="#c8c8c8" stroke-width="1"/><line x1="1255.5" y1="190" x2="1255.5" y2="210" stroke="#bdbab4" stroke-width="1"/><line x1="1337.5" y1="210" x2="1337.5" y2="1032" stroke="#c8c8c8" stroke-width="1"/><line x1="1337.5" y1="190" x2="1337.5" y2="210" stroke="#bdbab4" stroke-width="1"/><line x1="1419.5" y1="210" x2="1419.5" y2="1032" stroke="#c8c8c8" stroke-width="1"/><line x1="1419.5" y1="190" x2="1419.5" y2="210" stroke="#bdbab4" stroke-width="1"/><line x1="1501.5" y1="210" x2="1501.5" y2="1032" stroke="#c8c8c8" stroke-width="1"/><line x1="1501.5" y1="190" x2="1501.5" y2="210" stroke="#bdbab4" stroke-width="1"/><line x1="1583.5" y1="210" x2="1583.5" y2="1032" stroke="#c8c8c8" stroke-width="1"/><line x1="1583.5" y1="190" x2="1583.5" y2="210" stroke="#bdbab4" stroke-width="1"/><line x1="1665.5" y1="210" x2="1665.5" y2="1032" stroke="#c8c8c8" stroke-width="1"/><line x1="1665.5" y1="190" x2="1665.5" y2="210" stroke="#bdbab4" stroke-width="1"/><line x1="1747.5" y1="210" x2="1747.5" y2="1032" stroke="#c8c8c8" stroke-width="1"/><line x1="1747.5" y1="190" x2="1747.5" y2="210" stroke="#bdbab4" stroke-width="1"/><line x1="1829.5" y1="210" x2="1829.5" y2="1032" stroke="#c8c8c8" stroke-width="1"/><line x1="1829.5" y1="190" x2="1829.5" y2="210" stroke="#bdbab4" stroke-width="1"/><line x1="1911.5" y1="210" x2="1911.5" y2="1032" stroke="#c8c8c8" stroke-width="1"/><line x1="1911.5" y1="190" x2="1911.5" y2="210" stroke="#bdbab4" stroke-width="1"/><line x1="67" y1="210.5" x2="1866" y2="210.5" stroke="#aeaba5"/><line x1="107.5" y1="190" x2="107.5" y2="1032" stroke="#a9a6a0"/><line x1="67" y1="190.5" x2="1866" y2="190.5" stroke="#c9c6c0"/><rect x="600" y="191" width="81" height="19" fill="#ef7f4f"/><rect x="600" y="191" width="81" height="9.5" fill="#f4a487"/><rect x="67" y="262" width="40" height="16" fill="#ef7f4f"/><rect x="67" y="262" width="19" height="16" fill="#f4a487"/><text x="148.0" y="206" text-anchor="middle" font-family="Liberation Sans" font-size="14" fill="#3c3c3c">A</text><text x="230.0" y="206" text-anchor="middle" font-family="Liberation Sans" font-size="14" fill="#3c3c3c">B</text><text x="312.0" y="206" text-anchor="middle" font-family="Liberation Sans" font-size="14" fill="#3c3c3c">C</text><text x="394.0" y="206" text-anchor="middle" font-family="Liberation Sans" font-size="14" fill="#3c3c3c">D</text><text x="476.0" y="206" text-anchor="middle" font-family="Liberation Sans" font-size="14" fill="#3c3c3c">E</text><text x="558.0" y="206" text-anchor="middle" font-family="Liberation Sans" font-size="14" fill="#3c3c3c">F</text><text x="640.0" y="206" text-anchor="middle" font-family="Liberation Sans" font-size="14" font-weight="bold" fill="#fff">G</text><text x="722.0" y="206" text-anchor="middle" font-family="Liberation Sans" font-size="14" fill="#3c3c3c">H</text><text x="804.0" y="206" text-anchor="middle" font-family="Liberation Sans" font-size="14" fill="#3c3c3c">I</text><text x="886.0" y="206" text-anchor="middle" font-family="Liberation Sans" font-size="14" fill="#3c3c3c">J</text><text x="968.0" y="206" text-anchor="middle" font-family="Liberation Sans" font-size="14" fill="#3c3c3c">K</text><text x="1050.0" y="206" text-anchor="middle" font-family="Liberation Sans" font-size="14" fill="#3c3c3c">L</text><text x="1132.0" y="206" text-anchor="middle" font-family="Liberation Sans" font-size="14" fill="#3c3c3c">M</text><text x="1214.0" y="206" text-anchor="middle" font-family="Liberation Sans" font-size="14" fill="#3c3c3c">N</text><text x="1296.0" y="206" text-anchor="middle" font-family="Liberation Sans" font-size="14" fill="#3c3c3c">O</text><text x="1378.0" y="206" text-anchor="middle" font-family="Liberation Sans" font-size="14" fill="#3c3c3c">P</text><text x="1460.0" y="206" text-anchor="middle" font-family="Liberation Sans" font-size="14" fill="#3c3c3c">Q</text><text x="1542.0" y="206" text-anchor="middle" font-family="Liberation Sans" font-size="14" fill="#3c3c3c">R</text><text x="1624.0" y="206" text-anchor="middle" font-family="Liberation Sans" font-size="14" fill="#3c3c3c">S</text><text x="1706.0" y="206" text-anchor="middle" font-family="Liberation Sans" font-size="14" fill="#3c3c3c">T</text><text x="1788.0" y="206" text-anchor="middle" font-family="Liberation Sans" font-size="14" fill="#3c3c3c">U</text><text x="87" y="225" text-anchor="middle" font-family="Liberation Sans" font-size="14" fill="#3c3c3c">1</text><text x="87" y="242" text-anchor="middle" font-family="Liberation Sans" font-size="14" fill="#3c3c3c">2</text><text x="87" y="259" text-anchor="middle" font-family="Liberation Sans" font-size="14" fill="#3c3c3c">3</text><text x="87" y="276" text-anchor="middle" font-family="Liberation Sans" font-size="14" font-weight="bold" fill="#fff">4</text><text x="87" y="293" text-anchor="middle" font-family="Liberation Sans" font-size="14" fill="#3c3c3c">5</text><text x="87" y="310" text-anchor="middle" font-family="Liberation Sans" font-size="14" fill="#3c3c3c">6</text><text x="87" y="327" text-anchor="middle" font-family="Liberation Sans" font-size="14" fill="#3c3c3c">7</text><text x="87" y="344" text-anchor="middle" font-family="Liberation Sans" font-size="14" fill="#3c3c3c">8</text><text x="87" y="361" text-anchor="middle" font-family="Liberation Sans" font-size="14" fill="#3c3c3c">9</text><text x="87" y="378" text-anchor="middle" font-family="Liberation Sans" font-size="14" fill="#3c3c3c">10</text><text x="87" y="395" text-anchor="middle" font-family="Liberation Sans" font-size="14" fill="#3c3c3c">11</text><text x="87" y="412" text-anchor="middle" font-family="Liberation Sans" font-size="14" fill="#3c3c3c">12</text><text x="87" y="429" text-anchor="middle" font-family="Liberation Sans" font-size="14" fill="#3c3c3c">13</text><text x="87" y="446" text-anchor="middle" font-family="Liberation Sans" font-size="14" fill="#3c3c3c">14</text><text x="87" y="463" text-anchor="middle" font-family="Liberation Sans" font-size="14" fill="#3c3c3c">15</text><text x="87" y="480" text-anchor="middle" font-family="Liberation Sans" font-size="14" fill="#3c3c3c">16</text><text x="87" y="497" text-anchor="middle" font-family="Liberation Sans" font-size="14" fill="#3c3c3c">17</text><text x="87" y="514" text-anchor="middle" font-family="Liberation Sans" font-size="14" fill="#3c3c3c">18</text><text x="87" y="531" text-anchor="middle" font-family="Liberation Sans" font-size="14" fill="#3c3c3c">19</text><text x="87" y="548" text-anchor="middle" font-family="Liberation Sans" font-size="14" fill="#3c3c3c">20</text><text x="87" y="565" text-anchor="middle" font-family="Liberation Sans" font-size="14" fill="#3c3c3c">21</text><text x="87" y="582" text-anchor="middle" font-family="Liberation Sans" font-size="14" fill="#3c3c3c">22</text><text x="87" y="599" text-anchor="middle" font-family="Liberation Sans" font-size="14" fill="#3c3c3c">23</text><text x="87" y="616" text-anchor="middle" font-family="Liberation Sans" font-size="14" fill="#3c3c3c">24</text><text x="87" y="633" text-anchor="middle" font-family="Liberation Sans" font-size="14" fill="#3c3c3c">25</text><text x="87" y="650" text-anchor="middle" font-family="Liberation Sans" font-size="14" fill="#3c3c3c">26</text><text x="87" y="667" text-anchor="middle" font-family="Liberation Sans" font-size="14" fill="#3c3c3c">27</text><text x="87" y="684" text-anchor="middle" font-family="Liberation Sans" font-size="14" fill="#3c3c3c">28</text><text x="87" y="701" text-anchor="middle" font-family="Liberation Sans" font-size="14" fill="#3c3c3c">29</text><text x="87" y="718" text-anchor="middle" font-family="Liberation Sans" font-size="14" fill="#3c3c3c">30</text><text x="87" y="735" text-anchor="middle" font-family="Liberation Sans" font-size="14" fill="#3c3c3c">31</text><text x="87" y="752" text-anchor="middle" font-family="Liberation Sans" font-size="14" fill="#3c3c3c">32</text><text x="87" y="769" text-anchor="middle" font-family="Liberation Sans" font-size="14" fill="#3c3c3c">33</text><text x="87" y="786" text-anchor="middle" font-family="Liberation Sans" font-size="14" fill="#3c3c3c">34</text><text x="87" y="803" text-anchor="middle" font-family="Liberation Sans" font-size="14" fill="#3c3c3c">35</text><text x="87" y="820" text-anchor="middle" font-family="Liberation Sans" font-size="14" fill="#3c3c3c">36</text><text x="87" y="837" text-anchor="middle" font-family="Liberation Sans" font-size="14" fill="#3c3c3c">37</text><text x="87" y="854" text-anchor="middle" font-family="Liberation Sans" font-size="14" fill="#3c3c3c">38</text><text x="87" y="871" text-anchor="middle" font-family="Liberation Sans" font-size="14" fill="#3c3c3c">39</text><text x="87" y="888" text-anchor="middle" font-family="Liberation Sans" font-size="14" fill="#3c3c3c">40</text><text x="87" y="905" text-anchor="middle" font-family="Liberation Sans" font-size="14" fill="#3c3c3c">41</text><text x="87" y="922" text-anchor="middle" font-family="Liberation Sans" font-size="14" fill="#3c3c3c">42</text><text x="87" y="939" text-anchor="middle" font-family="Liberation Sans" font-size="14" fill="#3c3c3c">43</text><text x="87" y="956" text-anchor="middle" font-family="Liberation Sans" font-size="14" fill="#3c3c3c">44</text><text x="87" y="973" text-anchor="middle" font-family="Liberation Sans" font-size="14" fill="#3c3c3c">45</text><text x="87" y="990" text-anchor="middle" font-family="Liberation Sans" font-size="14" fill="#3c3c3c">46</text><text x="87" y="1007" text-anchor="middle" font-family="Liberation Sans" font-size="14" fill="#3c3c3c">47</text><text x="87" y="1024" text-anchor="middle" font-family="Liberation Sans" font-size="14" fill="#3c3c3c">48</text><text x="87" y="1041" text-anchor="middle" font-family="Liberation Sans" font-size="14" fill="#3c3c3c">49</text></svg>
<svg class="a" style="left:107px;top:210px;" width="576" height="172"><rect x="1" y="1" width="573" height="16" fill="#fff"/><line x1="0" y1="17.5" x2="575" y2="17.5" stroke="#000"/><line x1="0" y1="34.5" x2="575" y2="34.5" stroke="#000"/><line x1="0" y1="51.5" x2="575" y2="51.5" stroke="#000"/><line x1="0" y1="68.5" x2="575" y2="68.5" stroke="#000"/><line x1="0" y1="85.5" x2="575" y2="85.5" stroke="#000"/><line x1="0" y1="102.5" x2="575" y2="102.5" stroke="#000"/><line x1="0" y1="119.5" x2="575" y2="119.5" stroke="#000"/><line x1="0" y1="136.5" x2="575" y2="136.5" stroke="#000"/><line x1="0" y1="153.5" x2="575" y2="153.5" stroke="#000"/><line x1="82.5" y1="17" x2="82.5" y2="154" stroke="#000"/><line x1="164.5" y1="17" x2="164.5" y2="154" stroke="#000"/><line x1="246.5" y1="17" x2="246.5" y2="154" stroke="#000"/><line x1="328.5" y1="17" x2="328.5" y2="154" stroke="#000"/><line x1="410.5" y1="17" x2="410.5" y2="154" stroke="#000"/><line x1="492.5" y1="17" x2="492.5" y2="154" stroke="#000"/><line x1="574.5" y1="17" x2="574.5" y2="154" stroke="#000"/><rect x="493" y="52" width="81" height="16" fill="none" stroke="#000" stroke-width="2"/><rect x="572" y="66" width="5" height="5" fill="#000"/><text x="287.5" y="14" text-anchor="middle" font-family="Liberation Sans" font-size="13" font-weight="bold" fill="#000">Einheit ist Volt</text><text x="41.5" y="31" text-anchor="middle" font-family="Liberation Sans" font-size="13" font-weight="bold" fill="#000">Tag</text><text x="123.5" y="31" text-anchor="middle" font-family="Liberation Sans" font-size="13" font-weight="bold" fill="#000">AKKU 1</text><text x="205.5" y="31" text-anchor="middle" font-family="Liberation Sans" font-size="13" font-weight="bold" fill="#000">AKKU 2</text><text x="287.5" y="31" text-anchor="middle" font-family="Liberation Sans" font-size="13" font-weight="bold" fill="#000">AKKU 3</text><text x="369.5" y="31" text-anchor="middle" font-family="Liberation Sans" font-size="13" font-weight="bold" fill="#000">AKKU 4</text><text x="451.5" y="31" text-anchor="middle" font-family="Liberation Sans" font-size="13" font-weight="bold" fill="#000">AKKU 5</text><text x="533.5" y="31" text-anchor="middle" font-family="Liberation Sans" font-size="13" font-weight="bold" fill="#000">AKKU ges.</text><text x="41.5" y="48" text-anchor="middle" font-family="Liberation Sans" font-size="13" font-weight="bold" fill="#000">16.04.19</text><text x="123.5" y="48" text-anchor="middle" font-family="Liberation Sans" font-size="13" fill="#000">13,22</text><text x="205.5" y="48" text-anchor="middle" font-family="Liberation Sans" font-size="13" fill="#000">13,15</text><text x="287.5" y="48" text-anchor="middle" font-family="Liberation Sans" font-size="13" fill="#000">13,11</text><text x="369.5" y="48" text-anchor="middle" font-family="Liberation Sans" font-size="13" fill="#000">13,14</text><text x="451.5" y="48" text-anchor="middle" font-family="Liberation Sans" font-size="13" fill="#000">13,15</text><text x="533.5" y="48" text-anchor="middle" font-family="Liberation Sans" font-size="13" fill="#000">65,60</text><text x="41.5" y="65" text-anchor="middle" font-family="Liberation Sans" font-size="13" font-weight="bold" fill="#000">17.04.19</text><text x="123.5" y="65" text-anchor="middle" font-family="Liberation Sans" font-size="13" fill="#000">13,20</text><text x="205.5" y="65" text-anchor="middle" font-family="Liberation Sans" font-size="13" fill="#000">13,12</text><text x="287.5" y="65" text-anchor="middle" font-family="Liberation Sans" font-size="13" fill="#000">13,09</text><text x="369.5" y="65" text-anchor="middle" font-family="Liberation Sans" font-size="13" fill="#000">13,12</text><text x="451.5" y="65" text-anchor="middle" font-family="Liberation Sans" font-size="13" fill="#000">13,13</text><text x="533.5" y="65" text-anchor="middle" font-family="Liberation Sans" font-size="13" fill="#000">65,60</text><text x="41.5" y="82" text-anchor="middle" font-family="Liberation Sans" font-size="13" font-weight="bold" fill="#000">18.04.19</text><text x="123.5" y="82" text-anchor="middle" font-family="Liberation Sans" font-size="13" fill="#000">13,18</text><text x="205.5" y="82" text-anchor="middle" font-family="Liberation Sans" font-size="13" fill="#000">13,11</text><text x="287.5" y="82" text-anchor="middle" font-family="Liberation Sans" font-size="13" fill="#000">13,08</text><text x="369.5" y="82" text-anchor="middle" font-family="Liberation Sans" font-size="13" fill="#000">13,16</text><text x="451.5" y="82" text-anchor="middle" font-family="Liberation Sans" font-size="13" fill="#000">13,11</text><text x="533.5" y="82" text-anchor="middle" font-family="Liberation Sans" font-size="13" fill="#000">65,40</text><text x="41.5" y="99" text-anchor="middle" font-family="Liberation Sans" font-size="13" font-weight="bold" fill="#000">19.04.19</text><text x="123.5" y="99" text-anchor="middle" font-family="Liberation Sans" font-size="13" fill="#000">13,16</text><text x="205.5" y="99" text-anchor="middle" font-family="Liberation Sans" font-size="13" fill="#000">13,06</text><text x="287.5" y="99" text-anchor="middle" font-family="Liberation Sans" font-size="13" fill="#000">13,09</text><text x="369.5" y="99" text-anchor="middle" font-family="Liberation Sans" font-size="13" fill="#000">13,09</text><text x="451.5" y="99" text-anchor="middle" font-family="Liberation Sans" font-size="13" fill="#000">13,10</text><text x="533.5" y="99" text-anchor="middle" font-family="Liberation Sans" font-size="13" fill="#000">65,40</text><text x="41.5" y="116" text-anchor="middle" font-family="Liberation Sans" font-size="13" font-weight="bold" fill="#000">20.04.19</text><text x="123.5" y="116" text-anchor="middle" font-family="Liberation Sans" font-size="13" fill="#000">13,13</text><text x="205.5" y="116" text-anchor="middle" font-family="Liberation Sans" font-size="13" fill="#000">13,06</text><text x="287.5" y="116" text-anchor="middle" font-family="Liberation Sans" font-size="13" fill="#000">13,04</text><text x="369.5" y="116" text-anchor="middle" font-family="Liberation Sans" font-size="13" fill="#000">13,05</text><text x="451.5" y="116" text-anchor="middle" font-family="Liberation Sans" font-size="13" fill="#000">13,08</text><text x="533.5" y="116" text-anchor="middle" font-family="Liberation Sans" font-size="13" fill="#000">65,40</text><text x="41.5" y="133" text-anchor="middle" font-family="Liberation Sans" font-size="13" font-weight="bold" fill="#000">21.04.19</text><text x="123.5" y="133" text-anchor="middle" font-family="Liberation Sans" font-size="13" fill="#000">13,14</text><text x="205.5" y="133" text-anchor="middle" font-family="Liberation Sans" font-size="13" fill="#000">13,07</text><text x="287.5" y="133" text-anchor="middle" font-family="Liberation Sans" font-size="13" fill="#000">13,03</text><text x="369.5" y="133" text-anchor="middle" font-family="Liberation Sans" font-size="13" fill="#000">13,07</text><text x="451.5" y="133" text-anchor="middle" font-family="Liberation Sans" font-size="13" fill="#000">13,07</text><text x="533.5" y="133" text-anchor="middle" font-family="Liberation Sans" font-size="13" fill="#000">65,30</text><text x="41.5" y="150" text-anchor="middle" font-family="Liberation Sans" font-size="13" font-weight="bold" fill="#000">22.04.19</text><text x="123.5" y="150" text-anchor="middle" font-family="Liberation Sans" font-size="13" fill="#000">13,13</text><text x="205.5" y="150" text-anchor="middle" font-family="Liberation Sans" font-size="13" fill="#000">13,05</text><text x="287.5" y="150" text-anchor="middle" font-family="Liberation Sans" font-size="13" fill="#000">13,04</text><text x="369.5" y="150" text-anchor="middle" font-family="Liberation Sans" font-size="13" fill="#000">13,07</text><text x="451.5" y="150" text-anchor="middle" font-family="Liberation Sans" font-size="13" fill="#000">13,05</text><text x="533.5" y="150" text-anchor="middle" font-family="Liberation Sans" font-size="13" fill="#000">65,20</text><text x="41.5" y="167" text-anchor="middle" font-family="Liberation Sans" font-size="13" font-weight="bold" fill="#000">Differenz:</text><text x="123.5" y="167" text-anchor="middle" font-family="Liberation Sans" font-size="13" fill="#ff0000">-0,09</text><text x="205.5" y="167" text-anchor="middle" font-family="Liberation Sans" font-size="13" fill="#ff0000">-0,10</text><text x="287.5" y="167" text-anchor="middle" font-family="Liberation Sans" font-size="13" fill="#ff0000">-0,07</text><text x="369.5" y="167" text-anchor="middle" font-family="Liberation Sans" font-size="13" fill="#ff0000">-0,07</text><text x="451.5" y="167" text-anchor="middle" font-family="Liberation Sans" font-size="13" fill="#ff0000">-0,10</text><text x="533.5" y="167" text-anchor="middle" font-family="Liberation Sans" font-size="13" fill="#ff0000">-0,40</text><path d="M541 33.5 q1.5 -2 3 0 t3 0 t3 0 t3 0 t3 0 t3 0 t3 0 t3 0" fill="none" stroke="#e00" stroke-width="1"/></svg>
<svg class="a" style="left:109px;top:381px;" width="1168" height="647" viewBox="109 381 1168 647"><rect x="109.5" y="381.5" width="1167" height="646" fill="#fff" stroke="#000" stroke-width="1"/><line x1="258" y1="407.00" x2="263" y2="407.00" stroke="#b3b3b3"/><text x="254" y="410.5" text-anchor="end" font-family="Liberation Sans" font-size="12.5" fill="#000">13,25</text><line x1="263" y1="486.71" x2="1154" y2="486.71" stroke="#b3b3b3"/><line x1="258" y1="486.71" x2="263" y2="486.71" stroke="#b3b3b3"/><text x="254" y="490.5" text-anchor="end" font-family="Liberation Sans" font-size="12.5" fill="#000">13,20</text><line x1="263" y1="566.43" x2="1154" y2="566.43" stroke="#b3b3b3"/><line x1="258" y1="566.43" x2="263" y2="566.43" stroke="#b3b3b3"/><text x="254" y="569.5" text-anchor="end" font-family="Liberation Sans" font-size="12.5" fill="#000">13,15</text><line x1="263" y1="646.14" x2="1154" y2="646.14" stroke="#b3b3b3"/><line x1="258" y1="646.14" x2="263" y2="646.14" stroke="#b3b3b3"/><text x="254" y="649.5" text-anchor="end" font-family="Liberation Sans" font-size="12.5" fill="#000">13,10</text><line x1="263" y1="725.86" x2="1154" y2="725.86" stroke="#b3b3b3"/><line x1="258" y1="725.86" x2="263" y2="725.86" stroke="#b3b3b3"/><text x="254" y="729.5" text-anchor="end" font-family="Liberation Sans" font-size="12.5" fill="#000">13,05</text><line x1="263" y1="805.57" x2="1154" y2="805.57" stroke="#b3b3b3"/><line x1="258" y1="805.57" x2="263" y2="805.57" stroke="#b3b3b3"/><text x="254" y="809.5" text-anchor="end" font-family="Liberation Sans" font-size="12.5" fill="#000">13,00</text><line x1="263" y1="885.29" x2="1154" y2="885.29" stroke="#b3b3b3"/><line x1="258" y1="885.29" x2="263" y2="885.29" stroke="#b3b3b3"/><text x="254" y="888.5" text-anchor="end" font-family="Liberation Sans" font-size="12.5" fill="#000">12,95</text><line x1="258" y1="965.00" x2="263" y2="965.00" stroke="#b3b3b3"/><text x="254" y="968.5" text-anchor="end" font-family="Liberation Sans" font-size="12.5" fill="#000">12,90</text><line x1="263" y1="407.5" x2="1155" y2="407.5" stroke="#8c9c94" stroke-width="1.4"/><line x1="263" y1="965.5" x2="1155" y2="965.5" stroke="#b3b3b3"/><line x1="263.5" y1="407" x2="263.5" y2="966" stroke="#8f9c96" stroke-width="1.6"/><line x1="1154.5" y1="407" x2="1154.5" y2="966" stroke="#3f6a55" stroke-width="1.2"/><line x1="263.5" y1="965" x2="263.5" y2="971" stroke="#b3b3b3"/><text transform="translate(263,978) rotate(63)" x="0" y="4" font-family="Liberation Sans" font-size="12" fill="#000">15.04.19</text><line x1="374.5" y1="965" x2="374.5" y2="971" stroke="#b3b3b3"/><text transform="translate(374,978) rotate(63)" x="0" y="4" font-family="Liberation Sans" font-size="12" fill="#000">16.04.19</text><line x1="486.5" y1="965" x2="486.5" y2="971" stroke="#b3b3b3"/><text transform="translate(486,978) rotate(63)" x="0" y="4" font-family="Liberation Sans" font-size="12" fill="#000">17.04.19</text><line x1="597.5" y1="965" x2="597.5" y2="971" stroke="#b3b3b3"/><text transform="translate(597,978) rotate(63)" x="0" y="4" font-family="Liberation Sans" font-size="12" fill="#000">18.04.19</text><line x1="708.5" y1="965" x2="708.5" y2="971" stroke="#b3b3b3"/><text transform="translate(708,978) rotate(63)" x="0" y="4" font-family="Liberation Sans" font-size="12" fill="#000">19.04.19</text><line x1="820.5" y1="965" x2="820.5" y2="971" stroke="#b3b3b3"/><text transform="translate(820,978) rotate(63)" x="0" y="4" font-family="Liberation Sans" font-size="12" fill="#000">20.04.19</text><line x1="931.5" y1="965" x2="931.5" y2="971" stroke="#b3b3b3"/><text transform="translate(931,978) rotate(63)" x="0" y="4" font-family="Liberation Sans" font-size="12" fill="#000">21.04.19</text><line x1="1043.5" y1="965" x2="1043.5" y2="971" stroke="#b3b3b3"/><text transform="translate(1043,978) rotate(63)" x="0" y="4" font-family="Liberation Sans" font-size="12" fill="#000">22.04.19</text><line x1="1154.5" y1="965" x2="1154.5" y2="971" stroke="#b3b3b3"/><text transform="translate(1154,978) rotate(63)" x="0" y="4" font-family="Liberation Sans" font-size="12" fill="#000">23.04.19</text><polyline points="374.4,566.4 485.8,598.3 597.1,630.2 708.5,646.1 819.9,678.0 931.2,694.0 1042.6,725.9" fill="none" stroke="#7e0021" stroke-width="2" stroke-linejoin="round" stroke-linecap="round"/><polyline points="374.4,582.4 485.8,614.3 597.1,550.5 708.5,662.1 819.9,725.9 931.2,694.0 1042.6,694.0" fill="none" stroke="#579d1c" stroke-width="2" stroke-linejoin="round" stroke-linecap="round"/><polyline points="374.4,630.2 485.8,662.1 597.1,678.0 708.5,662.1 819.9,741.8 931.2,757.7 1042.6,741.8" fill="none" stroke="#ffd320" stroke-width="2" stroke-linejoin="round" stroke-linecap="round"/><polyline points="374.4,566.4 485.8,614.3 597.1,630.2 708.5,709.9 819.9,709.9 931.2,694.0 1042.6,725.9" fill="none" stroke="#ff420e" stroke-width="2" stroke-linejoin="round" stroke-linecap="round"/><polyline points="374.4,454.8 485.8,486.7 597.1,518.6 708.5,550.5 819.9,598.3 931.2,582.4 1042.6,598.3" fill="none" stroke="#004586" stroke-width="2" stroke-linejoin="round" stroke-linecap="round"/><line x1="1187" y1="667.0" x2="1216" y2="667.0" stroke="#004586" stroke-width="2"/><text x="1219" y="671.5" font-family="Liberation Sans" font-size="12.7" fill="#000">AKKU 1</text><line x1="1187" y1="685.7" x2="1216" y2="685.7" stroke="#ff420e" stroke-width="2"/><text x="1219" y="690.2" font-family="Liberation Sans" font-size="12.7" fill="#000">AKKU 2</text><line x1="1187" y1="704.4" x2="1216" y2="704.4" stroke="#ffd320" stroke-width="2"/><text x="1219" y="708.9" font-family="Liberation Sans" font-size="12.7" fill="#000">AKKU 3</text><line x1="1187" y1="723.1" x2="1216" y2="723.1" stroke="#579d1c" stroke-width="2"/><text x="1219" y="727.6" font-family="Liberation Sans" font-size="12.7" fill="#000">AKKU 4</text><line x1="1187" y1="741.8" x2="1216" y2="741.8" stroke="#7e0021" stroke-width="2"/><text x="1219" y="746.3" font-family="Liberation Sans" font-size="12.7" fill="#000">AKKU 5</text><text x="129" y="451" font-family="Liberation Sans" font-size="17.5" fill="#a00" style="text-shadow:0.6px 0.6px 0 #300" letter-spacing="-0.6">VOLT</text></svg>
<svg class="a" style="left:0;top:0;" width="1920" height="80"><defs><linearGradient id="wbg" x1="0" y1="0" x2="0" y2="1"><stop offset="0" stop-color="#7a7873"/><stop offset="1" stop-color="#55534e"/></linearGradient><linearGradient id="wbc" x1="0" y1="0" x2="0" y2="1"><stop offset="0" stop-color="#f07a4a"/><stop offset="1" stop-color="#df4a18"/></linearGradient></defs><path d="M117.5 5.5 h9 l3.5 3.5 v12.5 h-12.5 z" fill="#f4f4f4" stroke="#1e9a1e" stroke-width="1.2"/><path d="M126 5 h4 v4 z" fill="#1e9a1e"/><rect x="119.5" y="12" width="8" height="6" fill="#2a9a2a"/><path d="M119.5 14 h8 M119.5 16 h8 M122.2 12 v6 M124.8 12 v6" stroke="#fff" stroke-width="0.6"/><path d="M258 11 h10 l-5 5 z" fill="#dfdbd2"/><rect x="1790" y="6" width="5" height="5" fill="#dcdad5"/><rect x="1785" y="16" width="5" height="5" fill="#dcdad5"/><rect x="1795" y="16" width="5" height="5" fill="#dcdad5"/><path d="M1792.5 11 v3 M1787.5 16 v-2 h10 v2" fill="none" stroke="#dcdad5" stroke-width="1.2"/><path d="M1813 10 h3 l4 -4 v13 l-4 -4 h-3 z" fill="#dcdad5"/><path d="M1822.5 10 q1.5 2.5 0 5 M1825 8 q3 4.5 0 9" fill="none" stroke="#dcdad5" stroke-width="1.3"/><path d="M1827.5 6.5 q4 6 0 12" fill="none" stroke="#77756f" stroke-width="1.3"/><path d="M1841 10 h3 l4 -4 v13 l-4 -4 h-3 z" fill="#dcdad5"/><path d="M1850.5 10 q1.5 2.5 0 5 M1853 8 q3 4.5 0 9" fill="none" stroke="#dcdad5" stroke-width="1.3"/><path d="M1855.5 6.5 q4 6 0 12" fill="none" stroke="#dcdad5" stroke-width="1.3"/><path d="M1873.5 8.5 a6 6 0 1 0 7 0" fill="none" stroke="#dcdad5" stroke-width="1.6"/><path d="M1877 5 v7" stroke="#dcdad5" stroke-width="1.6"/><path d="M1895 11 h10 l-5 5 z" fill="#dcdad5"/><circle cx="1867" cy="41" r="8" fill="url(#wbg)" stroke="#3a3935" stroke-width="0.6"/><path d="M1863 41.5 h8" stroke="#3c3b37" stroke-width="1.4"/><circle cx="1887" cy="41" r="8" fill="url(#wbg)" stroke="#3a3935" stroke-width="0.6"/><rect x="1883.5" y="38.5" width="7" height="5" fill="none" stroke="#3c3b37" stroke-width="1.2"/><circle cx="1907" cy="41" r="8" fill="url(#wbc)" stroke="#a83a10" stroke-width="0.6"/><path d="M1904 38 l6 6 M1910 38 l-6 6" stroke="#2a2a2a" stroke-width="1.3"/><path d="M1899 64 l6 6 M1905 64 l-6 6" stroke="#333" stroke-width="1.1"/></svg>
<svg class="a" style="left:0;top:150px;" width="1920" height="930" viewBox="0 150 1920 930"><rect x="195" y="161" width="26" height="24" fill="#f3f2f0"/><path d="M195.5 161 v24" stroke="#d6d3cd"/><rect x="68.5" y="160.5" width="153" height="25" rx="4" fill="none" stroke="#b8b5ae"/><path d="M204 170.5 h9 l-4.5 5.5 z" fill="#000"/><rect x="1849.5" y="162.5" width="17" height="22" rx="3" fill="#f6f5f3" stroke="#b8b5ae"/><path d="M1854 171 h8 l-4 5 z" fill="#000"/><rect x="1866" y="190" width="7" height="842" fill="#f2f1f0"/><rect x="1866" y="198" width="7" height="407" fill="#f08d64"/><rect x="1866" y="191" width="6" height="2" fill="#333"/><rect x="1873" y="157" width="47" height="900" fill="#f2f1f0"/><path d="M1873.5 157 v900 M1879.5 157 v900" stroke="#a8a6a0"/><path d="M1873 157.5 h47" stroke="#c9c6c0"/><path d="M1873 1056.5 h47" stroke="#a8a6a0"/><rect x="1874" y="571" width="6" height="73" fill="#95928b"/><path d="M1874 603 l5 4 l-5 4 z" fill="#f2f2f2"/><path d="M1895 172 h6 M1895 175 h6 M1895 178 h6" stroke="#1d3f70" stroke-width="1"/><path d="M1900 179 h5 l-2.5 3 z" fill="#1d3f70"/><path d="M1888 195.5 h24" stroke="#dcd9d3"/><rect x="1884.5" y="200.5" width="31" height="31" rx="3" fill="#f4f3f1" stroke="#c2bfb8"/><path d="M1890 208 c2 -3 6 -3 7 0 l8 10 c3 0 5 2 4 5 l-2 -2 l-2 2 l2 2 c-3 1 -5 -1 -5 -4 l-8 -10 c-3 0 -5 -1 -4 -3 l2 2 l2 -2 z" fill="#eee" stroke="#777" stroke-width="0.9"/><path d="M1891 242 h16 v4 h-2 v-2 h-4 v14 h2 v2 h-8 v-2 h2 v-14 h-4 v2 h-2 z" fill="#3a3a3a"/><path d="M1888 262 l0 -13 l14 13 z" fill="#7cc84a" stroke="#3a9a2a" stroke-width="1"/><rect x="1889.5" y="279.5" width="22" height="14" rx="1.5" fill="#e8a83a" stroke="#9a6a18"/><rect x="1892" y="282" width="17" height="9" fill="#5a90c8"/><rect x="1892" y="287" width="17" height="4" fill="#f0c040"/><path d="M1900.5 279 l-3 -3 l3 -2 l3 2 z" fill="none" stroke="#777" stroke-width="0.8"/><circle cx="1900" cy="321" r="10" fill="#f4f4f4" stroke="#8a8a8a" stroke-width="1.6"/><path d="M1895 315 l6 5 l-1 1 z" fill="#e03030"/><path d="M1905 327 l-6 -5 l1 -1 z" fill="#3a6ac0"/><g transform="translate(1887,344) scale(1.15)"><text x="0" y="15" font-family="Liberation Serif" font-style="italic" font-weight="bold" font-size="17" fill="#8a5aaa" stroke="#5a2a7a" stroke-width="0.5">fx</text><path d="M3 2 l.8 1.6 1.7 .2 -1.3 1.2 .3 1.7 -1.5 -.8 -1.5 .8 .3 -1.7 -1.3 -1.2 1.7 -.2 z" fill="#f5d020"/><path d="M9 0 l.8 1.6 1.7 .2 -1.3 1.2 .3 1.7 -1.5 -.8 -1.5 .8 .3 -1.7 -1.3 -1.2 1.7 -.2 z" fill="#f5d020"/><path d="M14 1 l.8 1.6 1.7 .2 -1.3 1.2 .3 1.7 -1.5 -.8 -1.5 .8 .3 -1.7 -1.3 -1.2 1.7 -.2 z" fill="#f5d020"/></g><rect x="67" y="1032" width="1806" height="27" fill="#f2f1f0"/><rect x="67" y="1032" width="855" height="6" fill="#f08d64"/><rect x="1861" y="1032" width="5" height="6" fill="#9a9a9a"/><rect x="1863" y="1033" width="1" height="4" fill="#111"/><rect x="67" y="1059" width="1853" height="21" fill="#f2f1f0"/><path d="M67 1059.5 h1853" stroke="#b4b1aa"/><rect x="185.5" y="1038.5" width="103" height="20" fill="#ebe9e6" stroke="#b4b1aa"/><rect x="288.5" y="1038.5" width="74" height="20" fill="#fff" stroke="#b4b1aa"/><text x="198" y="1053" font-family="Liberation Sans" font-size="12.5" fill="#3c3c3c">Start 7.4.2019</text><text x="301" y="1053" font-family="Liberation Sans" font-size="12.5" font-weight="bold" fill="#3c3c3c">Tabelle2</text><path d="M81 1043 v9 M86 1043 l-4 4.5 l4 4.5 z" fill="#444" stroke="#444" stroke-width="1.2"/><path d="M106 1043 l-4 4.5 l4 4.5 z" fill="#444"/><path d="M120 1043 l4 4.5 l-4 4.5 z" fill="#444"/><path d="M143 1043 v9 M138 1043 l4 4.5 l-4 4.5 z" fill="#444" stroke="#444" stroke-width="1.2"/><path d="M169 1042 v11 M163.5 1047.5 h11" stroke="#444" stroke-width="3"/><path d="M324.5 1063 v15" stroke="#b4b1aa"/><path d="M665.5 1063 v15" stroke="#b4b1aa"/><path d="M887.5 1063 v15" stroke="#b4b1aa"/><path d="M1186.5 1063 v15" stroke="#b4b1aa"/><path d="M1254.5 1063 v15" stroke="#b4b1aa"/><path d="M1283.5 1063 v15" stroke="#b4b1aa"/><path d="M1312.5 1063 v15" stroke="#b4b1aa"/><path d="M1341.5 1063 v15" stroke="#b4b1aa"/><path d="M1728.5 1063 v15" stroke="#b4b1aa"/><path d="M1871.5 1063 v15" stroke="#b4b1aa"/><rect x="1265" y="1066" width="8" height="6" fill="#777"/><path d="M1275 1064.5 v9 M1273.5 1064.5 h3 M1273.5 1073.5 h3" stroke="#777"/><rect x="1294.5" y="1064.5" width="7" height="9" fill="none" stroke="#777"/><text x="1299" y="1075" font-family="Liberation Sans" font-size="11" font-weight="bold" fill="#c01010">*</text><path d="M1738 1070.5 h8" stroke="#777" stroke-width="1.6"/><path d="M1752 1070.5 h97" stroke="#999" stroke-width="1.2"/><circle cx="1800" cy="1070.5" r="4" fill="#fff" stroke="#777"/><path d="M1855 1070.5 h8 M1859 1066.5 v8" stroke="#777" stroke-width="1.6"/></svg>
<div class="t" style="left:77px;top:1065px;font-size:12.2px;color:#3c3c3c;">Tabelle 2 von 2</div>
<div class="t" style="left:672px;top:1065px;font-size:12.2px;color:#3c3c3c;">Standard</div>
<div class="t" style="left:975px;top:1065px;font-size:12.2px;color:#3c3c3c;">Deutsch (Deutschland)</div>
<div class="t" style="left:1447px;top:1065px;font-size:12.2px;color:#3c3c3c;">Mittelwert: 65,60; Summe: 65,60</div>
<div class="t" style="left:1878px;top:1065px;font-size:12.2px;color:#3c3c3c;">100%</div>
</body></html>
